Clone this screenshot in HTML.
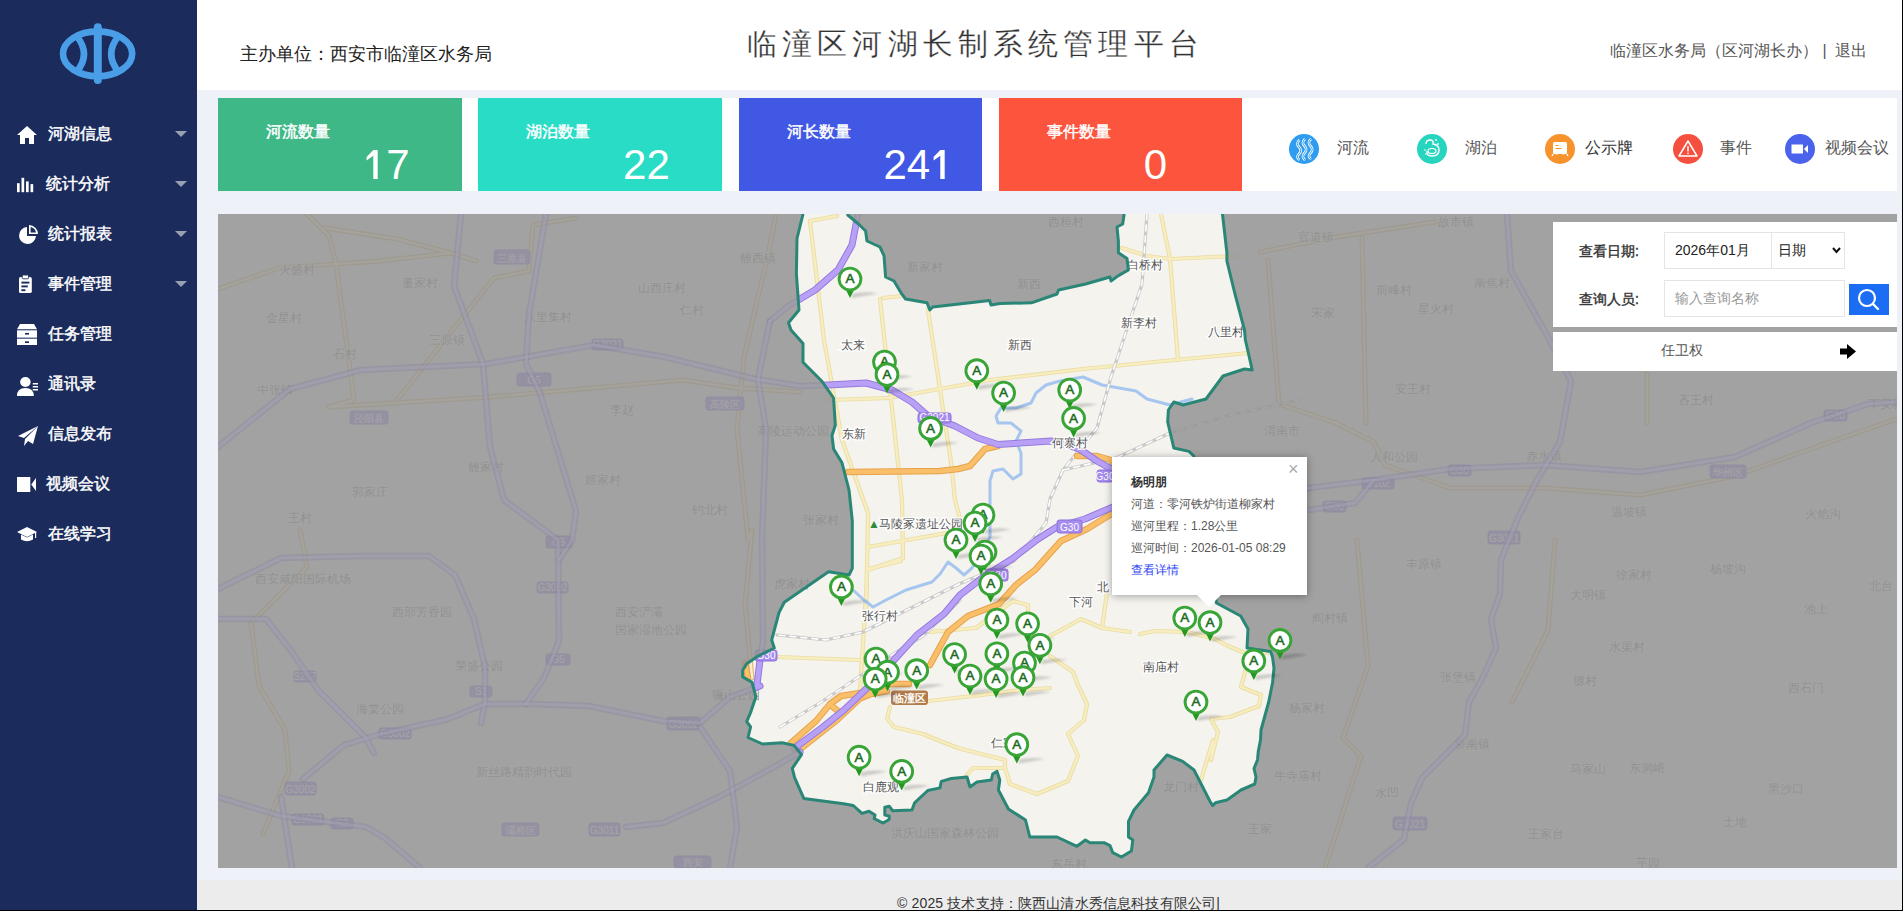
<!DOCTYPE html>
<html><head><meta charset="utf-8">
<style>
*{box-sizing:border-box;margin:0;padding:0}
html,body{width:1903px;height:911px;overflow:hidden;background:#eff1f8;font-family:"Liberation Sans",sans-serif;position:relative}
#side{position:absolute;left:0;top:0;width:197px;height:911px;background:#1a2b5c}
.mi{position:absolute;color:#fff;font-size:16px;-webkit-text-stroke:0.45px #fff;line-height:22px;white-space:nowrap}
#hdr{position:absolute;left:197px;top:0;width:1706px;height:90px;background:#fff}
#org{position:absolute;left:240px;top:42px;font-size:18px;line-height:24px;color:#222;white-space:nowrap}
#title{position:absolute;left:747px;top:26px;font-size:30px;line-height:36px;color:#333;letter-spacing:5.15px;white-space:nowrap;-webkit-text-stroke:0.25px #fff}
#user{position:absolute;left:1610px;top:40px;font-size:16px;line-height:22px;color:#555;white-space:nowrap}
#foot{position:absolute;left:197px;top:880px;width:1706px;height:31px;background:#ececec}
#ftxt{position:absolute;left:897px;top:894.5px;font-size:14px;line-height:16px;color:#333;white-space:nowrap;letter-spacing:0.15px}
#bottomline{position:absolute;left:0;top:910px;width:1903px;height:1px;background:#000}
#panel{position:absolute;left:218px;top:98px;width:1679px;height:93px;background:#fff}
.card{position:absolute;top:98px;width:243.5px;height:93px;color:#fff}
.card .lb{position:absolute;left:48px;top:23px;font-size:16px;-webkit-text-stroke:0.45px #fff;line-height:22px;white-space:nowrap}
.card .nm{position:absolute;left:144.8px;top:43.6px;font-size:42px;line-height:46px;white-space:nowrap}
.one{display:inline-block;vertical-align:-0.5px}
.lgc{position:absolute;top:134px;width:30px;height:30px;border-radius:50%}
.lgc svg{position:absolute;left:0;top:0}
.lgt{position:absolute;top:137px;font-size:16px;line-height:22px;color:#555;white-space:nowrap}
#map{position:absolute;left:218px;top:214px;width:1679px;height:654px;background:#a3a3a1;overflow:hidden}
.qp{position:absolute;background:#fff}
.ql{position:absolute;font-size:14px;-webkit-text-stroke:0.4px #333;color:#333;line-height:18px;white-space:nowrap}
.inp{position:absolute;border:1px solid #e4e4e4;background:#fff;font-size:14px;line-height:18px;white-space:nowrap}
#pop{position:absolute;left:1112px;top:457px;width:195px;height:138px;background:#fff;box-shadow:0 1px 8px rgba(0,0,0,0.35)}
#pop .pl{position:absolute;left:19px;font-size:12px;line-height:16px;color:#555;white-space:nowrap}
</style></head><body>
<div id="side">
<svg style="position:absolute;left:55px;top:20px" width="86" height="68" viewBox="55 20 86 68">
<ellipse cx="97.6" cy="53.8" rx="34.6" ry="22.4" fill="none" stroke="#4a9ee8" stroke-width="6.6"/>
<path d="M76.5 36 Q91.5 54 76.5 72" fill="none" stroke="#4a9ee8" stroke-width="6.6"/>
<path d="M118.7 36 Q103.7 54 118.7 72" fill="none" stroke="#4a9ee8" stroke-width="6.6"/>
<line x1="97.8" y1="27.3" x2="97.8" y2="80" stroke="#4a9ee8" stroke-width="8" stroke-linecap="round"/>
</svg>
<svg style="position:absolute;left:17px;top:125px" width="20" height="20" viewBox="0 0 20 20" preserveAspectRatio="none"><path d="M10 1 L0 10 L3 10 L3 19 L8 19 L8 13 L12 13 L12 19 L17 19 L17 10 L20 10 Z" fill="#fff"/></svg>
<div class="mi" style="left:47.5px;top:123px">河湖信息</div>
<svg style="position:absolute;left:175px;top:131px" width="12" height="6"><path d="M0 0 L12 0 L6 6 Z" fill="#9aa0b4"/></svg>
<svg style="position:absolute;left:17px;top:176px" width="18" height="18" viewBox="0 0 20 20" preserveAspectRatio="none"><rect x="0" y="8" width="3" height="10" fill="#fff"/><rect x="5" y="2" width="3" height="16" fill="#fff"/><rect x="10" y="6" width="3" height="12" fill="#fff"/><rect x="15" y="9" width="3" height="9" fill="#fff"/></svg>
<div class="mi" style="left:45.5px;top:173px">统计分析</div>
<svg style="position:absolute;left:175px;top:181px" width="12" height="6"><path d="M0 0 L12 0 L6 6 Z" fill="#9aa0b4"/></svg>
<svg style="position:absolute;left:18px;top:225px" width="20" height="20" viewBox="0 0 20 20" preserveAspectRatio="none"><path d="M9 2 A8.5 8.5 0 1 0 18 11 L9 11 Z" fill="#fff"/><path d="M11 0 L11 9 L20 9 A9 9 0 0 0 11 0 Z M12.6 2 A7 7 0 0 1 18 7.4 L12.6 7.4 Z" fill="#fff" fill-rule="evenodd"/></svg>
<div class="mi" style="left:47.5px;top:223px">统计报表</div>
<svg style="position:absolute;left:175px;top:231px" width="12" height="6"><path d="M0 0 L12 0 L6 6 Z" fill="#9aa0b4"/></svg>
<svg style="position:absolute;left:19px;top:275px" width="16" height="19" viewBox="0 0 20 20" preserveAspectRatio="none"><rect x="0" y="2" width="16" height="17" rx="2" fill="#fff"/><rect x="4" y="0" width="8" height="4" rx="1" fill="#fff" stroke="#1a2b5c" stroke-width="1"/><rect x="3" y="7" width="10" height="2" fill="#1a2b5c"/><rect x="3" y="11" width="8" height="2" fill="#1a2b5c"/><rect x="3" y="15" width="5" height="2" fill="#1a2b5c"/></svg>
<div class="mi" style="left:47.5px;top:273px">事件管理</div>
<svg style="position:absolute;left:175px;top:281px" width="12" height="6"><path d="M0 0 L12 0 L6 6 Z" fill="#9aa0b4"/></svg>
<svg style="position:absolute;left:17px;top:324px" width="20" height="21" viewBox="0 0 20 20" preserveAspectRatio="none"><path d="M3 0 L17 0 L20 5 L0 5 Z" fill="#fff"/><rect x="0" y="6" width="20" height="7" fill="#fff"/><rect x="0" y="14" width="20" height="7" fill="#fff"/><rect x="8" y="8.5" width="4" height="1.6" fill="#1a2b5c"/><rect x="8" y="16.5" width="4" height="1.6" fill="#1a2b5c"/></svg>
<div class="mi" style="left:48px;top:323px">任务管理</div>
<svg style="position:absolute;left:17px;top:376px" width="21" height="20" viewBox="0 0 20 20" preserveAspectRatio="none"><circle cx="8" cy="6" r="5" fill="#fff"/><path d="M0 20 Q0 12 8 12 Q16 12 16 20 Z" fill="#fff"/><rect x="15" y="7" width="5" height="1.5" fill="#fff"/><rect x="15" y="10" width="5" height="1.5" fill="#fff"/><rect x="15" y="13" width="5" height="1.5" fill="#fff"/></svg>
<div class="mi" style="left:48px;top:373px">通讯录</div>
<svg style="position:absolute;left:18px;top:426px" width="20" height="20" viewBox="0 0 20 20" preserveAspectRatio="none"><path d="M20 0 L0 10 L6 12 Z" fill="#fff"/><path d="M20 0 L7 13 L6 20 L10 15 L15 18 Z" fill="#fff"/></svg>
<div class="mi" style="left:48px;top:423px">信息发布</div>
<svg style="position:absolute;left:17px;top:477px" width="19" height="15" viewBox="0 0 20 15" preserveAspectRatio="none"><rect x="0" y="0" width="14" height="15" fill="#fff"/><path d="M15 7.5 L20 1 L20 14 Z" fill="#fff"/></svg>
<div class="mi" style="left:45.5px;top:473px">视频会议</div>
<svg style="position:absolute;left:17px;top:527px" width="20" height="15" viewBox="0 0 20 15" preserveAspectRatio="none"><path d="M10 0 L20 5 L10 10 L0 5 Z" fill="#fff"/><path d="M4 7.5 L4 12.5 Q10 16 16 12.5 L16 7.5 L10 10.5 Z" fill="#fff"/><rect x="18" y="5" width="1.2" height="6" fill="#fff"/></svg>
<div class="mi" style="left:48px;top:523px">在线学习</div>
</div>
<div id="hdr"></div>
<div id="org">主办单位：西安市临潼区水务局</div>
<div id="title">临潼区河湖长制系统管理平台</div>
<div id="user">临潼区水务局（区河湖长办）&nbsp;|&nbsp; 退出</div>
<div id="panel"></div>
<div class="card" style="left:218px;background:#3eb887"><div class="lb">河流数量</div><div class="nm"><svg class="one" width="23.4" height="29.2" viewBox="0 0 23.4 29.2"><polygon points="10.3,0 14.7,0 14.7,29.2 10.3,29.2 10.3,5.8 3.6,10.6 3.6,7.1" fill="#fff"/></svg>7</div></div>
<div class="card" style="left:478.3px;background:#28dcc6"><div class="lb">湖泊数量</div><div class="nm">22</div></div>
<div class="card" style="left:738.6px;background:#4158e4"><div class="lb">河长数量</div><div class="nm">24<svg class="one" width="23.4" height="29.2" viewBox="0 0 23.4 29.2"><polygon points="10.3,0 14.7,0 14.7,29.2 10.3,29.2 10.3,5.8 3.6,10.6 3.6,7.1" fill="#fff"/></svg></div></div>
<div class="card" style="left:998.9px;background:#fc543d"><div class="lb">事件数量</div><div class="nm">0</div></div>

<div class="lgc" style="left:1289px;background:#2e9cf0"><svg width="30" height="30" viewBox="0 0 30 30"><path d="M10.5 6 Q6.5 9.5 10 13 Q13.5 16.5 10 20 Q6.5 23.5 10.5 26 M16 5 Q12 8.5 15.5 12 Q19 15.5 15.5 19 Q12 22.5 16 26 M22 5 Q18 8.5 21.5 12 Q25 15.5 21.5 19 Q18 22.5 22 25" fill="none" stroke="#fff" stroke-width="2.6"/><path d="M10.5 6 Q6.5 9.5 10 13 Q13.5 16.5 10 20 Q6.5 23.5 10.5 26 M16 5 Q12 8.5 15.5 12 Q19 15.5 15.5 19 Q12 22.5 16 26 M22 5 Q18 8.5 21.5 12 Q25 15.5 21.5 19 Q18 22.5 22 25" fill="none" stroke="#2e9cf0" stroke-width="1"/></svg></div>
<div class="lgt" style="left:1337px">河流</div>
<div class="lgc" style="left:1416.5px;background:#27d4be"><svg width="30" height="30" viewBox="0 0 30 30"><path d="M9 10 Q9 6 13 6 Q17 6 16 10 Q22 11 22 16 Q22 22 15 22 Q9 22 10 17" fill="none" stroke="#fff" stroke-width="1.4"/><ellipse cx="15" cy="17" rx="4" ry="2.5" fill="none" stroke="#fff" stroke-width="1.2"/><circle cx="19" cy="6" r="0.9" fill="#fff"/><circle cx="21" cy="10" r="0.9" fill="#fff"/><circle cx="8" cy="16" r="0.8" fill="#fff"/><circle cx="9" cy="20" r="0.8" fill="#fff"/></svg></div>
<div class="lgt" style="left:1465px">湖泊</div>
<div class="lgc" style="left:1544.5px;background:#f7932d"><svg width="30" height="30" viewBox="0 0 30 30"><rect x="8" y="8" width="14" height="12" rx="1.5" fill="#fff"/><path d="M8 20 L7 22 M22 20 L23 22 M11 20 Q15 18 19 20" fill="none" stroke="#fff" stroke-width="1.4"/><rect x="10.5" y="11" width="3" height="1" fill="#f7932d"/><rect x="10.5" y="14" width="6" height="1" fill="#f7932d"/></svg></div>
<div class="lgt" style="left:1585px;color:#333">公示牌</div>
<div class="lgc" style="left:1672.5px;background:#f5503f"><svg width="30" height="30" viewBox="0 0 30 30"><path d="M15 7 L24 22 L6 22 Z" fill="none" stroke="#fff" stroke-width="1.5" stroke-linejoin="round"/><rect x="14.3" y="12" width="1.4" height="5.5" fill="#fff"/><rect x="14.3" y="18.6" width="1.4" height="1.5" fill="#fff"/></svg></div>
<div class="lgt" style="left:1720px">事件</div>
<div class="lgc" style="left:1784.5px;background:#4a62ec"><svg width="30" height="30" viewBox="0 0 30 30"><rect x="6.5" y="10.5" width="11.5" height="9" fill="#fff"/><path d="M19 15 L23 11 L23 19 Z" fill="#fff"/></svg></div>
<div class="lgt" style="left:1825px">视频会议</div>

<div id="map">
<svg width="1679" height="654" viewBox="218 214 1679 654" style="position:absolute;left:0;top:0" font-family="Liberation Sans, sans-serif">
<defs><filter id="blr" x="-50%" y="-50%" width="200%" height="200%"><feGaussianBlur stdDeviation="1.2"/></filter></defs>
<rect x="218" y="214" width="1679" height="654" fill="#f4f3ee"/>
<polyline points="307,214 329,236 336,264 354,400 329,407" fill="none" stroke-linejoin="round" stroke-linecap="round" stroke="#dfb978" stroke-width="5"/>
<polyline points="329,407 490,397 683,380 737,388 800,392" fill="none" stroke-linejoin="round" stroke-linecap="round" stroke="#dfb978" stroke-width="5"/>
<polyline points="218,289 279,268 336,264 379,261 451,253 476,261" fill="none" stroke-linejoin="round" stroke-linecap="round" stroke="#dfb978" stroke-width="5"/>
<polyline points="325,228 397,239 451,253" fill="none" stroke-linejoin="round" stroke-linecap="round" stroke="#dfb978" stroke-width="5"/>
<polyline points="397,400 494,278 529,271 533,225 576,218" fill="none" stroke-linejoin="round" stroke-linecap="round" stroke="#dfb978" stroke-width="5"/>
<polyline points="776,214 769,250 744,357 737,429 748,540 752,530 745,604 752,678" fill="none" stroke-linejoin="round" stroke-linecap="round" stroke="#dfb978" stroke-width="5"/>
<polyline points="300,530 307,567 251,623 259,686 285,730 289,771 263,834" fill="none" stroke-linejoin="round" stroke-linecap="round" stroke="#dfb978" stroke-width="5"/>
<polyline points="1260,252 1336,237 1435,222" fill="none" stroke-linejoin="round" stroke-linecap="round" stroke="#dfb978" stroke-width="5"/>
<polyline points="1268,260 1279,404 1336,423 1374,442 1385,465 1450,488 1545,488 1640,495 1735,476 1830,442 1897,419" fill="none" stroke-linejoin="round" stroke-linecap="round" stroke="#dfb978" stroke-width="5"/>
<polyline points="1362,237 1366,423" fill="none" stroke-linejoin="round" stroke-linecap="round" stroke="#dfb978" stroke-width="5"/>
<polyline points="1647,374 1647,423" fill="none" stroke-linejoin="round" stroke-linecap="round" stroke="#dfb978" stroke-width="5"/>
<polyline points="1357,540 1368,666 1343,738 1361,756 1325,868" fill="none" stroke-linejoin="round" stroke-linecap="round" stroke="#dfb978" stroke-width="5"/>
<polyline points="1555,540 1548,630 1512,702" fill="none" stroke-linejoin="round" stroke-linecap="round" stroke="#dfb978" stroke-width="5"/>
<polyline points="307,214 329,236 336,264 354,400 329,407" fill="none" stroke-linejoin="round" stroke-linecap="round" stroke="#fbefd0" stroke-width="2.6"/>
<polyline points="329,407 490,397 683,380 737,388 800,392" fill="none" stroke-linejoin="round" stroke-linecap="round" stroke="#fbefd0" stroke-width="2.6"/>
<polyline points="218,289 279,268 336,264 379,261 451,253 476,261" fill="none" stroke-linejoin="round" stroke-linecap="round" stroke="#fbefd0" stroke-width="2.6"/>
<polyline points="325,228 397,239 451,253" fill="none" stroke-linejoin="round" stroke-linecap="round" stroke="#fbefd0" stroke-width="2.6"/>
<polyline points="397,400 494,278 529,271 533,225 576,218" fill="none" stroke-linejoin="round" stroke-linecap="round" stroke="#fbefd0" stroke-width="2.6"/>
<polyline points="776,214 769,250 744,357 737,429 748,540 752,530 745,604 752,678" fill="none" stroke-linejoin="round" stroke-linecap="round" stroke="#fbefd0" stroke-width="2.6"/>
<polyline points="300,530 307,567 251,623 259,686 285,730 289,771 263,834" fill="none" stroke-linejoin="round" stroke-linecap="round" stroke="#fbefd0" stroke-width="2.6"/>
<polyline points="1260,252 1336,237 1435,222" fill="none" stroke-linejoin="round" stroke-linecap="round" stroke="#fbefd0" stroke-width="2.6"/>
<polyline points="1268,260 1279,404 1336,423 1374,442 1385,465 1450,488 1545,488 1640,495 1735,476 1830,442 1897,419" fill="none" stroke-linejoin="round" stroke-linecap="round" stroke="#fbefd0" stroke-width="2.6"/>
<polyline points="1362,237 1366,423" fill="none" stroke-linejoin="round" stroke-linecap="round" stroke="#fbefd0" stroke-width="2.6"/>
<polyline points="1647,374 1647,423" fill="none" stroke-linejoin="round" stroke-linecap="round" stroke="#fbefd0" stroke-width="2.6"/>
<polyline points="1357,540 1368,666 1343,738 1361,756 1325,868" fill="none" stroke-linejoin="round" stroke-linecap="round" stroke="#fbefd0" stroke-width="2.6"/>
<polyline points="1555,540 1548,630 1512,702" fill="none" stroke-linejoin="round" stroke-linecap="round" stroke="#fbefd0" stroke-width="2.6"/>
<text x="279" y="274" font-size="12" fill="#888" stroke="#fff" stroke-width="2" stroke-opacity="0.6" paint-order="stroke">火盛村</text>
<text x="402" y="287" font-size="12" fill="#888" stroke="#fff" stroke-width="2" stroke-opacity="0.6" paint-order="stroke">董家村</text>
<text x="266" y="322" font-size="12" fill="#888" stroke="#fff" stroke-width="2" stroke-opacity="0.6" paint-order="stroke">金星村</text>
<text x="429" y="344" font-size="12" fill="#888" stroke="#fff" stroke-width="2" stroke-opacity="0.6" paint-order="stroke">三原镇</text>
<text x="333" y="358" font-size="12" fill="#888" stroke="#fff" stroke-width="2" stroke-opacity="0.6" paint-order="stroke">石村</text>
<text x="257" y="394" font-size="12" fill="#888" stroke="#fff" stroke-width="2" stroke-opacity="0.6" paint-order="stroke">中张镇</text>
<text x="524" y="321" font-size="12" fill="#888" stroke="#fff" stroke-width="2" stroke-opacity="0.6" paint-order="stroke">八里集村</text>
<text x="638" y="292" font-size="12" fill="#888" stroke="#fff" stroke-width="2" stroke-opacity="0.6" paint-order="stroke">山西庄村</text>
<text x="680" y="314" font-size="12" fill="#888" stroke="#fff" stroke-width="2" stroke-opacity="0.6" paint-order="stroke">仁村</text>
<text x="740" y="262" font-size="12" fill="#888" stroke="#fff" stroke-width="2" stroke-opacity="0.6" paint-order="stroke">雒西镇</text>
<text x="610" y="414" font-size="12" fill="#888" stroke="#fff" stroke-width="2" stroke-opacity="0.6" paint-order="stroke">李赵</text>
<text x="468" y="471" font-size="12" fill="#888" stroke="#fff" stroke-width="2" stroke-opacity="0.6" paint-order="stroke">雒家村</text>
<text x="352" y="496" font-size="12" fill="#888" stroke="#fff" stroke-width="2" stroke-opacity="0.6" paint-order="stroke">郭家庄</text>
<text x="288" y="522" font-size="12" fill="#888" stroke="#fff" stroke-width="2" stroke-opacity="0.6" paint-order="stroke">王村</text>
<text x="585" y="484" font-size="12" fill="#888" stroke="#fff" stroke-width="2" stroke-opacity="0.6" paint-order="stroke">姬家村</text>
<text x="692" y="514" font-size="12" fill="#888" stroke="#fff" stroke-width="2" stroke-opacity="0.6" paint-order="stroke">钓北村</text>
<text x="757" y="435" font-size="12" fill="#888" stroke="#fff" stroke-width="2" stroke-opacity="0.6" paint-order="stroke">高陵运动公园</text>
<text x="255" y="583" font-size="12" fill="#888" stroke="#fff" stroke-width="2" stroke-opacity="0.6" paint-order="stroke">西安咸阳国际机场</text>
<text x="392" y="616" font-size="12" fill="#888" stroke="#fff" stroke-width="2" stroke-opacity="0.6" paint-order="stroke">西部芳香园</text>
<text x="455" y="670" font-size="12" fill="#888" stroke="#fff" stroke-width="2" stroke-opacity="0.6" paint-order="stroke">荣盛公园</text>
<text x="356" y="713" font-size="12" fill="#888" stroke="#fff" stroke-width="2" stroke-opacity="0.6" paint-order="stroke">海棠公园</text>
<text x="476" y="776" font-size="12" fill="#888" stroke="#fff" stroke-width="2" stroke-opacity="0.6" paint-order="stroke">新丝路精韵时代园</text>
<text x="615" y="616" font-size="12" fill="#888" stroke="#fff" stroke-width="2" stroke-opacity="0.6" paint-order="stroke">西安浐灞</text>
<text x="615" y="634" font-size="12" fill="#888" stroke="#fff" stroke-width="2" stroke-opacity="0.6" paint-order="stroke">国家湿地公园</text>
<text x="712" y="699" font-size="12" fill="#888" stroke="#fff" stroke-width="2" stroke-opacity="0.6" paint-order="stroke">骊山公园</text>
<text x="774" y="588" font-size="12" fill="#888" stroke="#fff" stroke-width="2" stroke-opacity="0.6" paint-order="stroke">虎家村</text>
<text x="803" y="524" font-size="12" fill="#888" stroke="#fff" stroke-width="2" stroke-opacity="0.6" paint-order="stroke">张家村</text>
<text x="1298" y="241" font-size="12" fill="#888" stroke="#fff" stroke-width="2" stroke-opacity="0.6" paint-order="stroke">官道镇</text>
<text x="1438" y="226" font-size="12" fill="#888" stroke="#fff" stroke-width="2" stroke-opacity="0.6" paint-order="stroke">故市镇</text>
<text x="1376" y="294" font-size="12" fill="#888" stroke="#fff" stroke-width="2" stroke-opacity="0.6" paint-order="stroke">前峰村</text>
<text x="1311" y="317" font-size="12" fill="#888" stroke="#fff" stroke-width="2" stroke-opacity="0.6" paint-order="stroke">宋家</text>
<text x="1474" y="287" font-size="12" fill="#888" stroke="#fff" stroke-width="2" stroke-opacity="0.6" paint-order="stroke">南焦村</text>
<text x="1418" y="313" font-size="12" fill="#888" stroke="#fff" stroke-width="2" stroke-opacity="0.6" paint-order="stroke">星火村</text>
<text x="1395" y="393" font-size="12" fill="#888" stroke="#fff" stroke-width="2" stroke-opacity="0.6" paint-order="stroke">安王村</text>
<text x="1264" y="435" font-size="12" fill="#888" stroke="#fff" stroke-width="2" stroke-opacity="0.6" paint-order="stroke">渭南市</text>
<text x="1370" y="461" font-size="12" fill="#888" stroke="#fff" stroke-width="2" stroke-opacity="0.6" paint-order="stroke">人和公园</text>
<text x="1526" y="460" font-size="12" fill="#888" stroke="#fff" stroke-width="2" stroke-opacity="0.6" paint-order="stroke">赤水镇</text>
<text x="1678" y="404" font-size="12" fill="#888" stroke="#fff" stroke-width="2" stroke-opacity="0.6" paint-order="stroke">吝王村</text>
<text x="1868" y="408" font-size="12" fill="#888" stroke="#fff" stroke-width="2" stroke-opacity="0.6" paint-order="stroke">下安村</text>
<text x="1611" y="516" font-size="12" fill="#888" stroke="#fff" stroke-width="2" stroke-opacity="0.6" paint-order="stroke">温坡镇</text>
<text x="1805" y="518" font-size="12" fill="#888" stroke="#fff" stroke-width="2" stroke-opacity="0.6" paint-order="stroke">火焰沟</text>
<text x="1406" y="568" font-size="12" fill="#888" stroke="#fff" stroke-width="2" stroke-opacity="0.6" paint-order="stroke">丰原镇</text>
<text x="1616" y="579" font-size="12" fill="#888" stroke="#fff" stroke-width="2" stroke-opacity="0.6" paint-order="stroke">徐家村</text>
<text x="1710" y="573" font-size="12" fill="#888" stroke="#fff" stroke-width="2" stroke-opacity="0.6" paint-order="stroke">杨坡沟</text>
<text x="1869" y="590" font-size="12" fill="#888" stroke="#fff" stroke-width="2" stroke-opacity="0.6" paint-order="stroke">北台</text>
<text x="1570" y="599" font-size="12" fill="#888" stroke="#fff" stroke-width="2" stroke-opacity="0.6" paint-order="stroke">大明镇</text>
<text x="1804" y="613" font-size="12" fill="#888" stroke="#fff" stroke-width="2" stroke-opacity="0.6" paint-order="stroke">池上</text>
<text x="1312" y="622" font-size="12" fill="#888" stroke="#fff" stroke-width="2" stroke-opacity="0.6" paint-order="stroke">阎村镇</text>
<text x="1609" y="651" font-size="12" fill="#888" stroke="#fff" stroke-width="2" stroke-opacity="0.6" paint-order="stroke">水渠村</text>
<text x="1440" y="681" font-size="12" fill="#888" stroke="#fff" stroke-width="2" stroke-opacity="0.6" paint-order="stroke">张堡镇</text>
<text x="1573" y="685" font-size="12" fill="#888" stroke="#fff" stroke-width="2" stroke-opacity="0.6" paint-order="stroke">塬村</text>
<text x="1788" y="692" font-size="12" fill="#888" stroke="#fff" stroke-width="2" stroke-opacity="0.6" paint-order="stroke">西石门</text>
<text x="1289" y="712" font-size="12" fill="#888" stroke="#fff" stroke-width="2" stroke-opacity="0.6" paint-order="stroke">杨家村</text>
<text x="1454" y="748" font-size="12" fill="#888" stroke="#fff" stroke-width="2" stroke-opacity="0.6" paint-order="stroke">桥南镇</text>
<text x="1570" y="773" font-size="12" fill="#888" stroke="#fff" stroke-width="2" stroke-opacity="0.6" paint-order="stroke">马家山</text>
<text x="1629" y="772" font-size="12" fill="#888" stroke="#fff" stroke-width="2" stroke-opacity="0.6" paint-order="stroke">东洞峪</text>
<text x="1274" y="780" font-size="12" fill="#888" stroke="#fff" stroke-width="2" stroke-opacity="0.6" paint-order="stroke">牛寺庙村</text>
<text x="1375" y="797" font-size="12" fill="#888" stroke="#fff" stroke-width="2" stroke-opacity="0.6" paint-order="stroke">水凹</text>
<text x="1768" y="793" font-size="12" fill="#888" stroke="#fff" stroke-width="2" stroke-opacity="0.6" paint-order="stroke">黑沙口</text>
<text x="1723" y="826" font-size="12" fill="#888" stroke="#fff" stroke-width="2" stroke-opacity="0.6" paint-order="stroke">土地</text>
<text x="1528" y="838" font-size="12" fill="#888" stroke="#fff" stroke-width="2" stroke-opacity="0.6" paint-order="stroke">王家台</text>
<text x="1248" y="833" font-size="12" fill="#888" stroke="#fff" stroke-width="2" stroke-opacity="0.6" paint-order="stroke">王家</text>
<text x="1163" y="791" font-size="12" fill="#888" stroke="#fff" stroke-width="2" stroke-opacity="0.6" paint-order="stroke">龙门村</text>
<text x="1636" y="867" font-size="12" fill="#888" stroke="#fff" stroke-width="2" stroke-opacity="0.6" paint-order="stroke">芋园</text>
<text x="1048" y="226" font-size="12" fill="#888" stroke="#fff" stroke-width="2" stroke-opacity="0.6" paint-order="stroke">西桓村</text>
<text x="907" y="271" font-size="12" fill="#888" stroke="#fff" stroke-width="2" stroke-opacity="0.6" paint-order="stroke">新家村</text>
<text x="1017" y="288" font-size="12" fill="#888" stroke="#fff" stroke-width="2" stroke-opacity="0.6" paint-order="stroke">新西</text>
<text x="891" y="837" font-size="12" fill="#888" stroke="#fff" stroke-width="2" stroke-opacity="0.6" paint-order="stroke">洪庆山国家森林公园</text>
<text x="1051" y="868" font-size="12" fill="#888" stroke="#fff" stroke-width="2" stroke-opacity="0.6" paint-order="stroke">东岳村</text>
<polyline points="810,221 837,216" fill="none" stroke-linejoin="round" stroke-linecap="round" stroke="#eadda2" stroke-width="4.2"/>
<polyline points="810,221 824,340 842,440 868,513 866,620" fill="none" stroke-linejoin="round" stroke-linecap="round" stroke="#eadda2" stroke-width="4.2"/>
<polyline points="880,299 902,500 903,558 868,570" fill="none" stroke-linejoin="round" stroke-linecap="round" stroke="#eadda2" stroke-width="4.2"/>
<polyline points="883,298 901,296" fill="none" stroke-linejoin="round" stroke-linecap="round" stroke="#eadda2" stroke-width="4.2"/>
<polyline points="928,310 951,462 955,500 962,526" fill="none" stroke-linejoin="round" stroke-linecap="round" stroke="#eadda2" stroke-width="4.2"/>
<polyline points="829,400 889,398 990,380 1083,369 1175,360 1248,353" fill="none" stroke-linejoin="round" stroke-linecap="round" stroke="#eadda2" stroke-width="4.2"/>
<polyline points="1122,248 1147,256 1170,259 1236,256" fill="none" stroke-linejoin="round" stroke-linecap="round" stroke="#eadda2" stroke-width="4.2"/>
<polyline points="1161,214 1170,259 1178,360" fill="none" stroke-linejoin="round" stroke-linecap="round" stroke="#eadda2" stroke-width="4.2"/>
<polyline points="868,547 947,533" fill="none" stroke-linejoin="round" stroke-linecap="round" stroke="#eadda2" stroke-width="4.2"/>
<polyline points="868,569 901,561" fill="none" stroke-linejoin="round" stroke-linecap="round" stroke="#eadda2" stroke-width="4.2"/>
<polyline points="867,580 860,691" fill="none" stroke-linejoin="round" stroke-linecap="round" stroke="#eadda2" stroke-width="4.2"/>
<polyline points="777,657 860,660" fill="none" stroke-linejoin="round" stroke-linecap="round" stroke="#eadda2" stroke-width="4.2"/>
<polyline points="930,632 976,628 1013,601 1028,605 1028,638" fill="none" stroke-linejoin="round" stroke-linecap="round" stroke="#eadda2" stroke-width="4.2"/>
<polyline points="1050,636 1081,619 1102,628 1130,632" fill="none" stroke-linejoin="round" stroke-linecap="round" stroke="#eadda2" stroke-width="4.2"/>
<polyline points="1107,593 1102,628" fill="none" stroke-linejoin="round" stroke-linecap="round" stroke="#eadda2" stroke-width="4.2"/>
<polyline points="1050,656 1073,672 1078,685 1087,704 1084,720 1068,734 1078,756 1068,781 1037,794 1010,784 1005,768 973,768 967,775" fill="none" stroke-linejoin="round" stroke-linecap="round" stroke="#eadda2" stroke-width="4.2"/>
<polyline points="890,707 887,718.5 894,727 923,734 940,741 958,748 981,754 1005,760 1005,768" fill="none" stroke-linejoin="round" stroke-linecap="round" stroke="#eadda2" stroke-width="4.2"/>
<polyline points="929,701 973,696 1021,690 1050,688" fill="none" stroke-linejoin="round" stroke-linecap="round" stroke="#eadda2" stroke-width="4.2"/>
<polyline points="1140,634 1155,631 1187,632 1215,639 1228,646 1245,653 1267,653" fill="none" stroke-linejoin="round" stroke-linecap="round" stroke="#eadda2" stroke-width="4.2"/>
<polyline points="1245,672 1241,687 1261,695 1259,706 1230,717 1211,719 1218,732 1211,760 1213,740 1201,780" fill="none" stroke-linejoin="round" stroke-linecap="round" stroke="#eadda2" stroke-width="4.2"/>
<polyline points="810,221 837,216" fill="none" stroke-linejoin="round" stroke-linecap="round" stroke="#f7edc0" stroke-width="2.4"/>
<polyline points="810,221 824,340 842,440 868,513 866,620" fill="none" stroke-linejoin="round" stroke-linecap="round" stroke="#f7edc0" stroke-width="2.4"/>
<polyline points="880,299 902,500 903,558 868,570" fill="none" stroke-linejoin="round" stroke-linecap="round" stroke="#f7edc0" stroke-width="2.4"/>
<polyline points="883,298 901,296" fill="none" stroke-linejoin="round" stroke-linecap="round" stroke="#f7edc0" stroke-width="2.4"/>
<polyline points="928,310 951,462 955,500 962,526" fill="none" stroke-linejoin="round" stroke-linecap="round" stroke="#f7edc0" stroke-width="2.4"/>
<polyline points="829,400 889,398 990,380 1083,369 1175,360 1248,353" fill="none" stroke-linejoin="round" stroke-linecap="round" stroke="#f7edc0" stroke-width="2.4"/>
<polyline points="1122,248 1147,256 1170,259 1236,256" fill="none" stroke-linejoin="round" stroke-linecap="round" stroke="#f7edc0" stroke-width="2.4"/>
<polyline points="1161,214 1170,259 1178,360" fill="none" stroke-linejoin="round" stroke-linecap="round" stroke="#f7edc0" stroke-width="2.4"/>
<polyline points="868,547 947,533" fill="none" stroke-linejoin="round" stroke-linecap="round" stroke="#f7edc0" stroke-width="2.4"/>
<polyline points="868,569 901,561" fill="none" stroke-linejoin="round" stroke-linecap="round" stroke="#f7edc0" stroke-width="2.4"/>
<polyline points="867,580 860,691" fill="none" stroke-linejoin="round" stroke-linecap="round" stroke="#f7edc0" stroke-width="2.4"/>
<polyline points="777,657 860,660" fill="none" stroke-linejoin="round" stroke-linecap="round" stroke="#f7edc0" stroke-width="2.4"/>
<polyline points="930,632 976,628 1013,601 1028,605 1028,638" fill="none" stroke-linejoin="round" stroke-linecap="round" stroke="#f7edc0" stroke-width="2.4"/>
<polyline points="1050,636 1081,619 1102,628 1130,632" fill="none" stroke-linejoin="round" stroke-linecap="round" stroke="#f7edc0" stroke-width="2.4"/>
<polyline points="1107,593 1102,628" fill="none" stroke-linejoin="round" stroke-linecap="round" stroke="#f7edc0" stroke-width="2.4"/>
<polyline points="1050,656 1073,672 1078,685 1087,704 1084,720 1068,734 1078,756 1068,781 1037,794 1010,784 1005,768 973,768 967,775" fill="none" stroke-linejoin="round" stroke-linecap="round" stroke="#f7edc0" stroke-width="2.4"/>
<polyline points="890,707 887,718.5 894,727 923,734 940,741 958,748 981,754 1005,760 1005,768" fill="none" stroke-linejoin="round" stroke-linecap="round" stroke="#f7edc0" stroke-width="2.4"/>
<polyline points="929,701 973,696 1021,690 1050,688" fill="none" stroke-linejoin="round" stroke-linecap="round" stroke="#f7edc0" stroke-width="2.4"/>
<polyline points="1140,634 1155,631 1187,632 1215,639 1228,646 1245,653 1267,653" fill="none" stroke-linejoin="round" stroke-linecap="round" stroke="#f7edc0" stroke-width="2.4"/>
<polyline points="1245,672 1241,687 1261,695 1259,706 1230,717 1211,719 1218,732 1211,760 1213,740 1201,780" fill="none" stroke-linejoin="round" stroke-linecap="round" stroke="#f7edc0" stroke-width="2.4"/>
<polyline points="1192,399 1170,405 1147,399 1136,391 1102,385 1083,377 1060,381 1046,385 1036,393 1031,403 1016,408 1001,408 996,416 998,423 1011,423 1021,431 1016,441 1021,453 1021,474 1013,479 1003,469 993,471 990,481 990,512 990,537 972,568 964,575 956,568 948,562 940,574 932,582 906,590 886,600 873,607 864,600 853,590" fill="none" stroke-linejoin="round" stroke-linecap="round" stroke="#a6c6f0" stroke-width="3"/>
<polyline points="1147,214 1142,284 1111,377 1097,428 1063,470 1050,499 1046,523 1014,561 959,584 895,616 863,632 826,640 777,635" fill="none" stroke-linejoin="round" stroke-linecap="round" stroke="#c9c9c9" stroke-width="3.2"/>
<polyline points="780,727 823,701 858.5,677 880,663 901,649 923,636 960,600" fill="none" stroke-linejoin="round" stroke-linecap="round" stroke="#c9c9c9" stroke-width="3.2"/>
<polyline points="1063,470 1116,458 1170,433 1230,415 1300,400" fill="none" stroke-linejoin="round" stroke-linecap="round" stroke="#c9c9c9" stroke-width="3.2"/>
<polyline points="1147,214 1142,284 1111,377 1097,428 1063,470 1050,499 1046,523 1014,561 959,584 895,616 863,632 826,640 777,635" fill="none" stroke-linejoin="round" stroke-linecap="round" stroke="#ffffff" stroke-width="1.6" stroke-dasharray="6 5"/>
<polyline points="780,727 823,701 858.5,677 880,663 901,649 923,636 960,600" fill="none" stroke-linejoin="round" stroke-linecap="round" stroke="#ffffff" stroke-width="1.6" stroke-dasharray="6 5"/>
<polyline points="1063,470 1116,458 1170,433 1230,415 1300,400" fill="none" stroke-linejoin="round" stroke-linecap="round" stroke="#ffffff" stroke-width="1.6" stroke-dasharray="6 5"/>
<polyline points="848,472 940,471 958,469 970,466 985,449 998,446" fill="none" stroke-linejoin="round" stroke-linecap="round" stroke="#e9a24c" stroke-width="6.5"/>
<polyline points="1077,456 1097,456 1111,460 1118,470" fill="none" stroke-linejoin="round" stroke-linecap="round" stroke="#e9a24c" stroke-width="6.5"/>
<polyline points="791,743 816,721 830,704 841,696 860,693 868,691 891,684 909,684" fill="none" stroke-linejoin="round" stroke-linecap="round" stroke="#e9a24c" stroke-width="6.5"/>
<polyline points="799,750 837,720 860,698.5 871,694 887,691" fill="none" stroke-linejoin="round" stroke-linecap="round" stroke="#e9a24c" stroke-width="6.5"/>
<polyline points="833,707 838.5,711.5" fill="none" stroke-linejoin="round" stroke-linecap="round" stroke="#e9a24c" stroke-width="6.5"/>
<polyline points="930,665 948,632 968,616 999,604 1016,585 1035,570 1061,541 1087,529 1113,513 1150,500" fill="none" stroke-linejoin="round" stroke-linecap="round" stroke="#e9a24c" stroke-width="6.5"/>
<polyline points="745,663 748,678" fill="none" stroke-linejoin="round" stroke-linecap="round" stroke="#e9a24c" stroke-width="6.5"/>
<polyline points="848,472 940,471 958,469 970,466 985,449 998,446" fill="none" stroke-linejoin="round" stroke-linecap="round" stroke="#f9bf69" stroke-width="4.5"/>
<polyline points="1077,456 1097,456 1111,460 1118,470" fill="none" stroke-linejoin="round" stroke-linecap="round" stroke="#f9bf69" stroke-width="4.5"/>
<polyline points="791,743 816,721 830,704 841,696 860,693 868,691 891,684 909,684" fill="none" stroke-linejoin="round" stroke-linecap="round" stroke="#f9bf69" stroke-width="4.5"/>
<polyline points="799,750 837,720 860,698.5 871,694 887,691" fill="none" stroke-linejoin="round" stroke-linecap="round" stroke="#f9bf69" stroke-width="4.5"/>
<polyline points="833,707 838.5,711.5" fill="none" stroke-linejoin="round" stroke-linecap="round" stroke="#f9bf69" stroke-width="4.5"/>
<polyline points="930,665 948,632 968,616 999,604 1016,585 1035,570 1061,541 1087,529 1113,513 1150,500" fill="none" stroke-linejoin="round" stroke-linecap="round" stroke="#f9bf69" stroke-width="4.5"/>
<polyline points="745,663 748,678" fill="none" stroke-linejoin="round" stroke-linecap="round" stroke="#f9bf69" stroke-width="4.5"/>
<clipPath id="inside"><polygon points="802.8,215 797,238.5 796.4,274 799,310 788.5,322.7 791,330 803,343.6 803,362.3 821.7,381 833.6,398 835.3,425.3 832,435.5 833.6,449 842,462.8 849,490 852.3,520.6 852.3,568.3 849,575 828.5,571.7 784.3,602.3 779,612.6 771.7,640 774.3,648 758.5,655.8 746.7,663.7 742.7,670.3 742.7,676.9 752,682.2 755.9,696.7 750.6,712.5 746.7,721.7 750.6,727 748,737.5 762.5,744 782.2,742.8 794,745.4 801.5,754.6 792.3,768.4 794.6,777.6 803.8,798.4 843.5,803.7 853.2,805.5 862,813.4 869,811.2 875,815.1 874.2,818.6 883,823 889.2,819.5 889.2,816 884.8,815.1 884.8,807.2 889.2,806.3 892.7,810.7 912,809.9 914.6,802.8 927.8,790.5 940,787.9 941.3,781.4 951.3,778.5 967,777 970,787 977,782 991.3,780 992.7,774 997,771.4 999.8,780 998.4,790 1008.4,809 1025.5,820 1029.8,837 1057,837 1076.9,846.3 1085.4,840 1090,842.7 1104,842.7 1110,845.6 1112.8,852.7 1121.4,857 1131.4,851 1132.8,840 1128.5,837 1128.5,821.3 1134,810 1148.5,792.8 1154,777 1154,770 1167,755 1182.7,761.4 1194,770 1209.8,801 1212.7,805.6 1215.5,802.8 1227,800 1241,790 1254.8,784 1256,777 1254,768.5 1257.5,760 1258.3,751.4 1260.5,740 1261,730 1268.7,702 1272.5,683 1274,668 1272.5,657 1270.6,651.6 1247,648 1248,629 1240.7,616 1216.5,603 1212,560 1205,500 1193.8,456 1189,451.4 1173.8,448 1167.7,422 1168.4,410 1173.8,402 1183,405 1206,399 1223,376 1244.5,369 1252.2,370 1245.4,340 1244.5,330 1235.4,295.6 1226.9,261 1226.9,252.8 1222.6,215 1222,205 1124,205 1124,215 1122.7,224 1117,227 1118.4,241.4 1118.4,252.8 1127,258.5 1128.4,270 1118.4,275.6 1111,281 1110,277 1085.6,284 1058.5,290 1057,294 1031.4,302.8 1000,303.5 991,305 989.7,300.6 932.7,307 929.8,310 927,302.8 905.6,299 901,292.8 894,281 885.6,277 884,255.7 880,247 867,241 865.6,231 858.5,224 847.8,215 847.8,205 802.8,205"/></clipPath><clipPath id="outside"><path clip-rule="evenodd" d="M218 214 H1897 V868 H218 Z M802.8,215 L797,238.5 L796.4,274 L799,310 L788.5,322.7 L791,330 L803,343.6 L803,362.3 L821.7,381 L833.6,398 L835.3,425.3 L832,435.5 L833.6,449 L842,462.8 L849,490 L852.3,520.6 L852.3,568.3 L849,575 L828.5,571.7 L784.3,602.3 L779,612.6 L771.7,640 L774.3,648 L758.5,655.8 L746.7,663.7 L742.7,670.3 L742.7,676.9 L752,682.2 L755.9,696.7 L750.6,712.5 L746.7,721.7 L750.6,727 L748,737.5 L762.5,744 L782.2,742.8 L794,745.4 L801.5,754.6 L792.3,768.4 L794.6,777.6 L803.8,798.4 L843.5,803.7 L853.2,805.5 L862,813.4 L869,811.2 L875,815.1 L874.2,818.6 L883,823 L889.2,819.5 L889.2,816 L884.8,815.1 L884.8,807.2 L889.2,806.3 L892.7,810.7 L912,809.9 L914.6,802.8 L927.8,790.5 L940,787.9 L941.3,781.4 L951.3,778.5 L967,777 L970,787 L977,782 L991.3,780 L992.7,774 L997,771.4 L999.8,780 L998.4,790 L1008.4,809 L1025.5,820 L1029.8,837 L1057,837 L1076.9,846.3 L1085.4,840 L1090,842.7 L1104,842.7 L1110,845.6 L1112.8,852.7 L1121.4,857 L1131.4,851 L1132.8,840 L1128.5,837 L1128.5,821.3 L1134,810 L1148.5,792.8 L1154,777 L1154,770 L1167,755 L1182.7,761.4 L1194,770 L1209.8,801 L1212.7,805.6 L1215.5,802.8 L1227,800 L1241,790 L1254.8,784 L1256,777 L1254,768.5 L1257.5,760 L1258.3,751.4 L1260.5,740 L1261,730 L1268.7,702 L1272.5,683 L1274,668 L1272.5,657 L1270.6,651.6 L1247,648 L1248,629 L1240.7,616 L1216.5,603 L1212,560 L1205,500 L1193.8,456 L1189,451.4 L1173.8,448 L1167.7,422 L1168.4,410 L1173.8,402 L1183,405 L1206,399 L1223,376 L1244.5,369 L1252.2,370 L1245.4,340 L1244.5,330 L1235.4,295.6 L1226.9,261 L1226.9,252.8 L1222.6,215 L1222,205 L1124,205 L1124,215 L1122.7,224 L1117,227 L1118.4,241.4 L1118.4,252.8 L1127,258.5 L1128.4,270 L1118.4,275.6 L1111,281 L1110,277 L1085.6,284 L1058.5,290 L1057,294 L1031.4,302.8 L1000,303.5 L991,305 L989.7,300.6 L932.7,307 L929.8,310 L927,302.8 L905.6,299 L901,292.8 L894,281 L885.6,277 L884,255.7 L880,247 L867,241 L865.6,231 L858.5,224 L847.8,215 L847.8,205 L802.8,205 Z"/></clipPath>
<g clip-path="url(#inside)">
<polyline points="858,214 852,245 838,270 815,290 790,305 770,321" fill="none" stroke-linejoin="round" stroke-linecap="round" stroke="#957ade" stroke-width="7"/>
<polyline points="218,447 290,389 361,370 486,364 594,345 665,357 755,379 800,386 828,385 866,383 892,390 912,402 928,416 955,426 978,438 998,444.5 1051,441 1074,447 1081,450 1097,461 1113,470 1140,482 1200,490 1309,488 1374,480 1450,469 1545,465 1640,472 1735,457 1811,423 1868,404 1897,402" fill="none" stroke-linejoin="round" stroke-linecap="round" stroke="#957ade" stroke-width="7"/>
<polyline points="794,748.5 823,727 844,710 864,691 879,676 894,660 917,635 944,614 960,595 982,578 1012,559 1038,539 1057,527 1085,519 1113,507 1160,495 1250,490 1309,488" fill="none" stroke-linejoin="round" stroke-linecap="round" stroke="#957ade" stroke-width="7"/>
<polyline points="461,214 454,286 483,364 490,447 504,500 558,540 559,641 544,678 526,704" fill="none" stroke-linejoin="round" stroke-linecap="round" stroke="#957ade" stroke-width="7"/>
<polyline points="546,214 529,314 526,364 540,393 562,465 576,511 572,540 559,560" fill="none" stroke-linejoin="round" stroke-linecap="round" stroke="#957ade" stroke-width="7"/>
<polyline points="770,321 758,379 766,429 762,540 763,641 760,660 757,685" fill="none" stroke-linejoin="round" stroke-linecap="round" stroke="#957ade" stroke-width="7"/>
<polyline points="218,589 281,558 359,556 429,556 455,575 474,619 485,667 485,701 481,723" fill="none" stroke-linejoin="round" stroke-linecap="round" stroke="#957ade" stroke-width="7"/>
<polyline points="218,619 266,619 292,652 318,690 366,738 374,753" fill="none" stroke-linejoin="round" stroke-linecap="round" stroke="#957ade" stroke-width="7"/>
<polyline points="303,779 344,745 381,734 448,719 485,704 533,704 589,706 663,721 700,723 730,697 760,686" fill="none" stroke-linejoin="round" stroke-linecap="round" stroke="#957ade" stroke-width="7"/>
<polyline points="218,797 281,816 366,827 385,838 420,868" fill="none" stroke-linejoin="round" stroke-linecap="round" stroke="#957ade" stroke-width="7"/>
<polyline points="626,827 663,823 719,797 774,767 800,752" fill="none" stroke-linejoin="round" stroke-linecap="round" stroke="#957ade" stroke-width="7"/>
<polyline points="700,727 730,771 737,827 730,868" fill="none" stroke-linejoin="round" stroke-linecap="round" stroke="#957ade" stroke-width="7"/>
<polyline points="281,797 292,868" fill="none" stroke-linejoin="round" stroke-linecap="round" stroke="#957ade" stroke-width="7"/>
<polyline points="1507,214 1511,271 1549,339 1571,381 1560,442 1537,480 1518,518 1501,560 1500,594 1491,619 1496,648 1483,677 1469,702 1465,735 1422,778 1411,803 1404,839 1368,868" fill="none" stroke-linejoin="round" stroke-linecap="round" stroke="#957ade" stroke-width="7"/>
<polyline points="1309,510 1355,503 1374,480" fill="none" stroke-linejoin="round" stroke-linecap="round" stroke="#957ade" stroke-width="7"/>
<polyline points="858,214 852,245 838,270 815,290 790,305 770,321" fill="none" stroke-linejoin="round" stroke-linecap="round" stroke="#b8a0f6" stroke-width="5"/>
<polyline points="218,447 290,389 361,370 486,364 594,345 665,357 755,379 800,386 828,385 866,383 892,390 912,402 928,416 955,426 978,438 998,444.5 1051,441 1074,447 1081,450 1097,461 1113,470 1140,482 1200,490 1309,488 1374,480 1450,469 1545,465 1640,472 1735,457 1811,423 1868,404 1897,402" fill="none" stroke-linejoin="round" stroke-linecap="round" stroke="#b8a0f6" stroke-width="5"/>
<polyline points="794,748.5 823,727 844,710 864,691 879,676 894,660 917,635 944,614 960,595 982,578 1012,559 1038,539 1057,527 1085,519 1113,507 1160,495 1250,490 1309,488" fill="none" stroke-linejoin="round" stroke-linecap="round" stroke="#b8a0f6" stroke-width="5"/>
<polyline points="461,214 454,286 483,364 490,447 504,500 558,540 559,641 544,678 526,704" fill="none" stroke-linejoin="round" stroke-linecap="round" stroke="#b8a0f6" stroke-width="5"/>
<polyline points="546,214 529,314 526,364 540,393 562,465 576,511 572,540 559,560" fill="none" stroke-linejoin="round" stroke-linecap="round" stroke="#b8a0f6" stroke-width="5"/>
<polyline points="770,321 758,379 766,429 762,540 763,641 760,660 757,685" fill="none" stroke-linejoin="round" stroke-linecap="round" stroke="#b8a0f6" stroke-width="5"/>
<polyline points="218,589 281,558 359,556 429,556 455,575 474,619 485,667 485,701 481,723" fill="none" stroke-linejoin="round" stroke-linecap="round" stroke="#b8a0f6" stroke-width="5"/>
<polyline points="218,619 266,619 292,652 318,690 366,738 374,753" fill="none" stroke-linejoin="round" stroke-linecap="round" stroke="#b8a0f6" stroke-width="5"/>
<polyline points="303,779 344,745 381,734 448,719 485,704 533,704 589,706 663,721 700,723 730,697 760,686" fill="none" stroke-linejoin="round" stroke-linecap="round" stroke="#b8a0f6" stroke-width="5"/>
<polyline points="218,797 281,816 366,827 385,838 420,868" fill="none" stroke-linejoin="round" stroke-linecap="round" stroke="#b8a0f6" stroke-width="5"/>
<polyline points="626,827 663,823 719,797 774,767 800,752" fill="none" stroke-linejoin="round" stroke-linecap="round" stroke="#b8a0f6" stroke-width="5"/>
<polyline points="700,727 730,771 737,827 730,868" fill="none" stroke-linejoin="round" stroke-linecap="round" stroke="#b8a0f6" stroke-width="5"/>
<polyline points="281,797 292,868" fill="none" stroke-linejoin="round" stroke-linecap="round" stroke="#b8a0f6" stroke-width="5"/>
<polyline points="1507,214 1511,271 1549,339 1571,381 1560,442 1537,480 1518,518 1501,560 1500,594 1491,619 1496,648 1483,677 1469,702 1465,735 1422,778 1411,803 1404,839 1368,868" fill="none" stroke-linejoin="round" stroke-linecap="round" stroke="#b8a0f6" stroke-width="5"/>
<polyline points="1309,510 1355,503 1374,480" fill="none" stroke-linejoin="round" stroke-linecap="round" stroke="#b8a0f6" stroke-width="5"/>
</g>
<rect x="494" y="250" width="36" height="14" rx="2.5" fill="#a78cf0" stroke="#8c70dc" stroke-width="1"/><text x="512.0" y="261.5" font-size="10" fill="#fff" text-anchor="middle">三原县</text>
<rect x="350" y="411" width="38" height="13" rx="2.5" fill="#a78cf0" stroke="#8c70dc" stroke-width="1"/><text x="369.0" y="421.5" font-size="10" fill="#fff" text-anchor="middle">泾阳县</text>
<rect x="592" y="339" width="31" height="11" rx="2.5" fill="#a78cf0" stroke="#8c70dc" stroke-width="1"/><text x="607.5" y="347.5" font-size="10" fill="#fff" text-anchor="middle">G3021</text>
<rect x="517" y="373" width="34" height="13" rx="2.5" fill="#a78cf0" stroke="#8c70dc" stroke-width="1"/><text x="534.0" y="383.5" font-size="10" fill="#fff" text-anchor="middle">G5</text>
<rect x="706" y="397" width="38" height="13" rx="2.5" fill="#a78cf0" stroke="#8c70dc" stroke-width="1"/><text x="725.0" y="407.5" font-size="10" fill="#fff" text-anchor="middle">高陵区</text>
<rect x="546" y="536" width="26" height="12" rx="2.5" fill="#a78cf0" stroke="#8c70dc" stroke-width="1"/><text x="559.0" y="545.5" font-size="10" fill="#fff" text-anchor="middle">G5</text>
<rect x="537" y="582" width="31" height="11" rx="2.5" fill="#a78cf0" stroke="#8c70dc" stroke-width="1"/><text x="552.5" y="590.5" font-size="10" fill="#fff" text-anchor="middle">G3002</text>
<rect x="546" y="654" width="24" height="11" rx="2.5" fill="#a78cf0" stroke="#8c70dc" stroke-width="1"/><text x="558.0" y="662.5" font-size="10" fill="#fff" text-anchor="middle">G5</text>
<rect x="470" y="686" width="22" height="11" rx="2.5" fill="#a78cf0" stroke="#8c70dc" stroke-width="1"/><text x="481.0" y="694.5" font-size="10" fill="#fff" text-anchor="middle">S1</text>
<rect x="379" y="728" width="32" height="11" rx="2.5" fill="#a78cf0" stroke="#8c70dc" stroke-width="1"/><text x="395.0" y="736.5" font-size="10" fill="#fff" text-anchor="middle">G3002</text>
<rect x="294" y="671" width="22" height="11" rx="2.5" fill="#a78cf0" stroke="#8c70dc" stroke-width="1"/><text x="305.0" y="679.5" font-size="10" fill="#fff" text-anchor="middle">S207</text>
<rect x="285" y="782" width="31" height="13" rx="2.5" fill="#a78cf0" stroke="#8c70dc" stroke-width="1"/><text x="300.5" y="792.5" font-size="10" fill="#fff" text-anchor="middle">G3002</text>
<rect x="292" y="814" width="32" height="11" rx="2.5" fill="#a78cf0" stroke="#8c70dc" stroke-width="1"/><text x="308.0" y="822.5" font-size="10" fill="#fff" text-anchor="middle">G1021</text>
<rect x="331" y="818" width="22" height="11" rx="2.5" fill="#a78cf0" stroke="#8c70dc" stroke-width="1"/><text x="342.0" y="826.5" font-size="10" fill="#fff" text-anchor="middle">S2</text>
<rect x="502" y="823" width="37" height="13" rx="2.5" fill="#a78cf0" stroke="#8c70dc" stroke-width="1"/><text x="520.5" y="833.5" font-size="10" fill="#fff" text-anchor="middle">灞桥区</text>
<rect x="589" y="823" width="31" height="13" rx="2.5" fill="#a78cf0" stroke="#8c70dc" stroke-width="1"/><text x="604.5" y="833.5" font-size="10" fill="#fff" text-anchor="middle">G3011</text>
<rect x="667" y="717" width="33" height="13" rx="2.5" fill="#a78cf0" stroke="#8c70dc" stroke-width="1"/><text x="683.5" y="727.5" font-size="10" fill="#fff" text-anchor="middle">G3002</text>
<rect x="1448" y="465" width="23" height="11" rx="2.5" fill="#a78cf0" stroke="#8c70dc" stroke-width="1"/><text x="1459.5" y="473.5" font-size="10" fill="#fff" text-anchor="middle">G30</text>
<rect x="1362" y="478" width="32" height="11" rx="2.5" fill="#a78cf0" stroke="#8c70dc" stroke-width="1"/><text x="1378.0" y="486.5" font-size="10" fill="#fff" text-anchor="middle">S102</text>
<rect x="1323" y="501" width="23" height="11" rx="2.5" fill="#a78cf0" stroke="#8c70dc" stroke-width="1"/><text x="1334.5" y="509.5" font-size="10" fill="#fff" text-anchor="middle">G30</text>
<rect x="1710" y="465" width="36" height="13" rx="2.5" fill="#a78cf0" stroke="#8c70dc" stroke-width="1"/><text x="1728.0" y="475.5" font-size="10" fill="#fff" text-anchor="middle">华州区</text>
<rect x="1824" y="410" width="23" height="11" rx="2.5" fill="#a78cf0" stroke="#8c70dc" stroke-width="1"/><text x="1835.5" y="418.5" font-size="10" fill="#fff" text-anchor="middle">G30</text>
<rect x="1488" y="531" width="32" height="13" rx="2.5" fill="#a78cf0" stroke="#8c70dc" stroke-width="1"/><text x="1504.0" y="541.5" font-size="10" fill="#fff" text-anchor="middle">G3021</text>
<rect x="1393" y="817" width="34" height="13" rx="2.5" fill="#a78cf0" stroke="#8c70dc" stroke-width="1"/><text x="1410.0" y="827.5" font-size="10" fill="#fff" text-anchor="middle">G3021</text>
<rect x="674" y="856" width="37" height="12" rx="2.5" fill="#a78cf0" stroke="#8c70dc" stroke-width="1"/><text x="692.5" y="865.5" font-size="10" fill="#fff" text-anchor="middle">西安</text>
<rect x="918" y="413" width="33" height="10" rx="2.5" fill="#a78cf0" stroke="#8c70dc" stroke-width="1"/><text x="934.5" y="420.5" font-size="10" fill="#fff" text-anchor="middle">G3021</text>
<rect x="1057" y="520" width="25" height="13" rx="2.5" fill="#a78cf0" stroke="#8c70dc" stroke-width="1"/><text x="1069.5" y="530.5" font-size="10" fill="#fff" text-anchor="middle">G30</text>
<rect x="1097" y="470" width="16" height="12" rx="2.5" fill="#a78cf0" stroke="#8c70dc" stroke-width="1"/><text x="1105.0" y="479.5" font-size="10" fill="#fff" text-anchor="middle">G30</text>
<rect x="755" y="650" width="22" height="11" rx="2.5" fill="#a78cf0" stroke="#8c70dc" stroke-width="1"/><text x="766.0" y="658.5" font-size="10" fill="#fff" text-anchor="middle">G30</text>
<rect x="986" y="569" width="22" height="12" rx="2.5" fill="#a78cf0" stroke="#8c70dc" stroke-width="1"/><text x="997.0" y="578.5" font-size="10" fill="#fff" text-anchor="middle">G30</text>
<text x="841" y="349" font-size="12" fill="#555" stroke="#fff" stroke-width="2.5" paint-order="stroke">太来</text>
<text x="1008" y="349" font-size="12" fill="#555" stroke="#fff" stroke-width="2.5" paint-order="stroke">新西</text>
<text x="842" y="438" font-size="12" fill="#555" stroke="#fff" stroke-width="2.5" paint-order="stroke">东新</text>
<text x="1052" y="447" font-size="12" fill="#555" stroke="#fff" stroke-width="2.5" paint-order="stroke">何寨村</text>
<text x="1121" y="327" font-size="12" fill="#555" stroke="#fff" stroke-width="2.5" paint-order="stroke">新李村</text>
<text x="1208" y="336" font-size="12" fill="#555" stroke="#fff" stroke-width="2.5" paint-order="stroke">八里村</text>
<text x="1127" y="269" font-size="12" fill="#555" stroke="#fff" stroke-width="2.5" paint-order="stroke">白桥村</text>
<text x="862" y="620" font-size="12" fill="#555" stroke="#fff" stroke-width="2.5" paint-order="stroke">张行村</text>
<text x="1069" y="606" font-size="12" fill="#555" stroke="#fff" stroke-width="2.5" paint-order="stroke">下河</text>
<text x="1143" y="671" font-size="12" fill="#555" stroke="#fff" stroke-width="2.5" paint-order="stroke">南庙村</text>
<text x="991" y="747" font-size="12" fill="#555" stroke="#fff" stroke-width="2.5" paint-order="stroke">仁宗</text>
<text x="863" y="791" font-size="12" fill="#555" stroke="#fff" stroke-width="2.5" paint-order="stroke">白鹿观</text>
<text x="1097" y="591" font-size="12" fill="#555" stroke="#fff" stroke-width="2.5" paint-order="stroke">北</text>
<text x="868" y="528" font-size="12" fill="#2e8b3a">&#9650;</text><text x="879" y="528" font-size="12" fill="#555" stroke="#fff" stroke-width="2.5" paint-order="stroke">马陵冢遗址公园</text>
<rect x="891" y="690.5" width="37" height="14.5" rx="3" fill="#b27b4a"/><text x="909.5" y="702" font-size="11" font-weight="bold" fill="#fff" text-anchor="middle">临潼区</text>
<path fill-rule="evenodd" fill="rgb(147,147,146)" fill-opacity="0.84" d="M218 214 H1897 V868 H218 Z M802.8,215 L797,238.5 L796.4,274 L799,310 L788.5,322.7 L791,330 L803,343.6 L803,362.3 L821.7,381 L833.6,398 L835.3,425.3 L832,435.5 L833.6,449 L842,462.8 L849,490 L852.3,520.6 L852.3,568.3 L849,575 L828.5,571.7 L784.3,602.3 L779,612.6 L771.7,640 L774.3,648 L758.5,655.8 L746.7,663.7 L742.7,670.3 L742.7,676.9 L752,682.2 L755.9,696.7 L750.6,712.5 L746.7,721.7 L750.6,727 L748,737.5 L762.5,744 L782.2,742.8 L794,745.4 L801.5,754.6 L792.3,768.4 L794.6,777.6 L803.8,798.4 L843.5,803.7 L853.2,805.5 L862,813.4 L869,811.2 L875,815.1 L874.2,818.6 L883,823 L889.2,819.5 L889.2,816 L884.8,815.1 L884.8,807.2 L889.2,806.3 L892.7,810.7 L912,809.9 L914.6,802.8 L927.8,790.5 L940,787.9 L941.3,781.4 L951.3,778.5 L967,777 L970,787 L977,782 L991.3,780 L992.7,774 L997,771.4 L999.8,780 L998.4,790 L1008.4,809 L1025.5,820 L1029.8,837 L1057,837 L1076.9,846.3 L1085.4,840 L1090,842.7 L1104,842.7 L1110,845.6 L1112.8,852.7 L1121.4,857 L1131.4,851 L1132.8,840 L1128.5,837 L1128.5,821.3 L1134,810 L1148.5,792.8 L1154,777 L1154,770 L1167,755 L1182.7,761.4 L1194,770 L1209.8,801 L1212.7,805.6 L1215.5,802.8 L1227,800 L1241,790 L1254.8,784 L1256,777 L1254,768.5 L1257.5,760 L1258.3,751.4 L1260.5,740 L1261,730 L1268.7,702 L1272.5,683 L1274,668 L1272.5,657 L1270.6,651.6 L1247,648 L1248,629 L1240.7,616 L1216.5,603 L1212,560 L1205,500 L1193.8,456 L1189,451.4 L1173.8,448 L1167.7,422 L1168.4,410 L1173.8,402 L1183,405 L1206,399 L1223,376 L1244.5,369 L1252.2,370 L1245.4,340 L1244.5,330 L1235.4,295.6 L1226.9,261 L1226.9,252.8 L1222.6,215 L1222,205 L1124,205 L1124,215 L1122.7,224 L1117,227 L1118.4,241.4 L1118.4,252.8 L1127,258.5 L1128.4,270 L1118.4,275.6 L1111,281 L1110,277 L1085.6,284 L1058.5,290 L1057,294 L1031.4,302.8 L1000,303.5 L991,305 L989.7,300.6 L932.7,307 L929.8,310 L927,302.8 L905.6,299 L901,292.8 L894,281 L885.6,277 L884,255.7 L880,247 L867,241 L865.6,231 L858.5,224 L847.8,215 L847.8,205 L802.8,205 Z"/>
<g clip-path="url(#outside)">
<polyline points="858,214 852,245 838,270 815,290 790,305 770,321" fill="none" stroke-linejoin="round" stroke-linecap="round" stroke="rgb(140,136,162)" stroke-opacity="0.45" stroke-width="6.5"/>
<polyline points="218,447 290,389 361,370 486,364 594,345 665,357 755,379 800,386 828,385 866,383 892,390 912,402 928,416 955,426 978,438 998,444.5 1051,441 1074,447 1081,450 1097,461 1113,470 1140,482 1200,490 1309,488 1374,480 1450,469 1545,465 1640,472 1735,457 1811,423 1868,404 1897,402" fill="none" stroke-linejoin="round" stroke-linecap="round" stroke="rgb(140,136,162)" stroke-opacity="0.45" stroke-width="6.5"/>
<polyline points="794,748.5 823,727 844,710 864,691 879,676 894,660 917,635 944,614 960,595 982,578 1012,559 1038,539 1057,527 1085,519 1113,507 1160,495 1250,490 1309,488" fill="none" stroke-linejoin="round" stroke-linecap="round" stroke="rgb(140,136,162)" stroke-opacity="0.45" stroke-width="6.5"/>
<polyline points="461,214 454,286 483,364 490,447 504,500 558,540 559,641 544,678 526,704" fill="none" stroke-linejoin="round" stroke-linecap="round" stroke="rgb(140,136,162)" stroke-opacity="0.45" stroke-width="6.5"/>
<polyline points="546,214 529,314 526,364 540,393 562,465 576,511 572,540 559,560" fill="none" stroke-linejoin="round" stroke-linecap="round" stroke="rgb(140,136,162)" stroke-opacity="0.45" stroke-width="6.5"/>
<polyline points="770,321 758,379 766,429 762,540 763,641 760,660 757,685" fill="none" stroke-linejoin="round" stroke-linecap="round" stroke="rgb(140,136,162)" stroke-opacity="0.45" stroke-width="6.5"/>
<polyline points="218,589 281,558 359,556 429,556 455,575 474,619 485,667 485,701 481,723" fill="none" stroke-linejoin="round" stroke-linecap="round" stroke="rgb(140,136,162)" stroke-opacity="0.45" stroke-width="6.5"/>
<polyline points="218,619 266,619 292,652 318,690 366,738 374,753" fill="none" stroke-linejoin="round" stroke-linecap="round" stroke="rgb(140,136,162)" stroke-opacity="0.45" stroke-width="6.5"/>
<polyline points="303,779 344,745 381,734 448,719 485,704 533,704 589,706 663,721 700,723 730,697 760,686" fill="none" stroke-linejoin="round" stroke-linecap="round" stroke="rgb(140,136,162)" stroke-opacity="0.45" stroke-width="6.5"/>
<polyline points="218,797 281,816 366,827 385,838 420,868" fill="none" stroke-linejoin="round" stroke-linecap="round" stroke="rgb(140,136,162)" stroke-opacity="0.45" stroke-width="6.5"/>
<polyline points="626,827 663,823 719,797 774,767 800,752" fill="none" stroke-linejoin="round" stroke-linecap="round" stroke="rgb(140,136,162)" stroke-opacity="0.45" stroke-width="6.5"/>
<polyline points="700,727 730,771 737,827 730,868" fill="none" stroke-linejoin="round" stroke-linecap="round" stroke="rgb(140,136,162)" stroke-opacity="0.45" stroke-width="6.5"/>
<polyline points="281,797 292,868" fill="none" stroke-linejoin="round" stroke-linecap="round" stroke="rgb(140,136,162)" stroke-opacity="0.45" stroke-width="6.5"/>
<polyline points="1507,214 1511,271 1549,339 1571,381 1560,442 1537,480 1518,518 1501,560 1500,594 1491,619 1496,648 1483,677 1469,702 1465,735 1422,778 1411,803 1404,839 1368,868" fill="none" stroke-linejoin="round" stroke-linecap="round" stroke="rgb(140,136,162)" stroke-opacity="0.45" stroke-width="6.5"/>
<polyline points="1309,510 1355,503 1374,480" fill="none" stroke-linejoin="round" stroke-linecap="round" stroke="rgb(140,136,162)" stroke-opacity="0.45" stroke-width="6.5"/>
<polyline points="858,214 852,245 838,270 815,290 790,305 770,321" fill="none" stroke-linejoin="round" stroke-linecap="round" stroke="rgb(170,168,182)" stroke-opacity="0.45" stroke-width="3.2"/>
<polyline points="218,447 290,389 361,370 486,364 594,345 665,357 755,379 800,386 828,385 866,383 892,390 912,402 928,416 955,426 978,438 998,444.5 1051,441 1074,447 1081,450 1097,461 1113,470 1140,482 1200,490 1309,488 1374,480 1450,469 1545,465 1640,472 1735,457 1811,423 1868,404 1897,402" fill="none" stroke-linejoin="round" stroke-linecap="round" stroke="rgb(170,168,182)" stroke-opacity="0.45" stroke-width="3.2"/>
<polyline points="794,748.5 823,727 844,710 864,691 879,676 894,660 917,635 944,614 960,595 982,578 1012,559 1038,539 1057,527 1085,519 1113,507 1160,495 1250,490 1309,488" fill="none" stroke-linejoin="round" stroke-linecap="round" stroke="rgb(170,168,182)" stroke-opacity="0.45" stroke-width="3.2"/>
<polyline points="461,214 454,286 483,364 490,447 504,500 558,540 559,641 544,678 526,704" fill="none" stroke-linejoin="round" stroke-linecap="round" stroke="rgb(170,168,182)" stroke-opacity="0.45" stroke-width="3.2"/>
<polyline points="546,214 529,314 526,364 540,393 562,465 576,511 572,540 559,560" fill="none" stroke-linejoin="round" stroke-linecap="round" stroke="rgb(170,168,182)" stroke-opacity="0.45" stroke-width="3.2"/>
<polyline points="770,321 758,379 766,429 762,540 763,641 760,660 757,685" fill="none" stroke-linejoin="round" stroke-linecap="round" stroke="rgb(170,168,182)" stroke-opacity="0.45" stroke-width="3.2"/>
<polyline points="218,589 281,558 359,556 429,556 455,575 474,619 485,667 485,701 481,723" fill="none" stroke-linejoin="round" stroke-linecap="round" stroke="rgb(170,168,182)" stroke-opacity="0.45" stroke-width="3.2"/>
<polyline points="218,619 266,619 292,652 318,690 366,738 374,753" fill="none" stroke-linejoin="round" stroke-linecap="round" stroke="rgb(170,168,182)" stroke-opacity="0.45" stroke-width="3.2"/>
<polyline points="303,779 344,745 381,734 448,719 485,704 533,704 589,706 663,721 700,723 730,697 760,686" fill="none" stroke-linejoin="round" stroke-linecap="round" stroke="rgb(170,168,182)" stroke-opacity="0.45" stroke-width="3.2"/>
<polyline points="218,797 281,816 366,827 385,838 420,868" fill="none" stroke-linejoin="round" stroke-linecap="round" stroke="rgb(170,168,182)" stroke-opacity="0.45" stroke-width="3.2"/>
<polyline points="626,827 663,823 719,797 774,767 800,752" fill="none" stroke-linejoin="round" stroke-linecap="round" stroke="rgb(170,168,182)" stroke-opacity="0.45" stroke-width="3.2"/>
<polyline points="700,727 730,771 737,827 730,868" fill="none" stroke-linejoin="round" stroke-linecap="round" stroke="rgb(170,168,182)" stroke-opacity="0.45" stroke-width="3.2"/>
<polyline points="281,797 292,868" fill="none" stroke-linejoin="round" stroke-linecap="round" stroke="rgb(170,168,182)" stroke-opacity="0.45" stroke-width="3.2"/>
<polyline points="1507,214 1511,271 1549,339 1571,381 1560,442 1537,480 1518,518 1501,560 1500,594 1491,619 1496,648 1483,677 1469,702 1465,735 1422,778 1411,803 1404,839 1368,868" fill="none" stroke-linejoin="round" stroke-linecap="round" stroke="rgb(170,168,182)" stroke-opacity="0.45" stroke-width="3.2"/>
<polyline points="1309,510 1355,503 1374,480" fill="none" stroke-linejoin="round" stroke-linecap="round" stroke="rgb(170,168,182)" stroke-opacity="0.45" stroke-width="3.2"/>
</g>
<polygon fill="none" stroke="#2a8676" stroke-width="3" stroke-linejoin="round" points="802.8,215 797,238.5 796.4,274 799,310 788.5,322.7 791,330 803,343.6 803,362.3 821.7,381 833.6,398 835.3,425.3 832,435.5 833.6,449 842,462.8 849,490 852.3,520.6 852.3,568.3 849,575 828.5,571.7 784.3,602.3 779,612.6 771.7,640 774.3,648 758.5,655.8 746.7,663.7 742.7,670.3 742.7,676.9 752,682.2 755.9,696.7 750.6,712.5 746.7,721.7 750.6,727 748,737.5 762.5,744 782.2,742.8 794,745.4 801.5,754.6 792.3,768.4 794.6,777.6 803.8,798.4 843.5,803.7 853.2,805.5 862,813.4 869,811.2 875,815.1 874.2,818.6 883,823 889.2,819.5 889.2,816 884.8,815.1 884.8,807.2 889.2,806.3 892.7,810.7 912,809.9 914.6,802.8 927.8,790.5 940,787.9 941.3,781.4 951.3,778.5 967,777 970,787 977,782 991.3,780 992.7,774 997,771.4 999.8,780 998.4,790 1008.4,809 1025.5,820 1029.8,837 1057,837 1076.9,846.3 1085.4,840 1090,842.7 1104,842.7 1110,845.6 1112.8,852.7 1121.4,857 1131.4,851 1132.8,840 1128.5,837 1128.5,821.3 1134,810 1148.5,792.8 1154,777 1154,770 1167,755 1182.7,761.4 1194,770 1209.8,801 1212.7,805.6 1215.5,802.8 1227,800 1241,790 1254.8,784 1256,777 1254,768.5 1257.5,760 1258.3,751.4 1260.5,740 1261,730 1268.7,702 1272.5,683 1274,668 1272.5,657 1270.6,651.6 1247,648 1248,629 1240.7,616 1216.5,603 1212,560 1205,500 1193.8,456 1189,451.4 1173.8,448 1167.7,422 1168.4,410 1173.8,402 1183,405 1206,399 1223,376 1244.5,369 1252.2,370 1245.4,340 1244.5,330 1235.4,295.6 1226.9,261 1226.9,252.8 1222.6,215 1222,205 1124,205 1124,215 1122.7,224 1117,227 1118.4,241.4 1118.4,252.8 1127,258.5 1128.4,270 1118.4,275.6 1111,281 1110,277 1085.6,284 1058.5,290 1057,294 1031.4,302.8 1000,303.5 991,305 989.7,300.6 932.7,307 929.8,310 927,302.8 905.6,299 901,292.8 894,281 885.6,277 884,255.7 880,247 867,241 865.6,231 858.5,224 847.8,215 847.8,205 802.8,205"/>
<path d="M852 298 L878 293.5 Q864 291 852 294 Z" fill="rgba(0,0,0,0.17)" filter="url(#blr)"/>
<path d="M886.5 381 L912.5 376.5 Q898.5 374 886.5 377 Z" fill="rgba(0,0,0,0.17)" filter="url(#blr)"/>
<path d="M889 393.6 L915 389.1 Q901 386.6 889 389.6 Z" fill="rgba(0,0,0,0.17)" filter="url(#blr)"/>
<path d="M978.8 389.7 L1004.8 385.2 Q990.8 382.7 978.8 385.7 Z" fill="rgba(0,0,0,0.17)" filter="url(#blr)"/>
<path d="M1005.6 412 L1031.6 407.5 Q1017.6 405 1005.6 408 Z" fill="rgba(0,0,0,0.17)" filter="url(#blr)"/>
<path d="M1071.7 409 L1097.7 404.5 Q1083.7 402 1071.7 405 Z" fill="rgba(0,0,0,0.17)" filter="url(#blr)"/>
<path d="M1075.6 437.4 L1101.6 432.9 Q1087.6 430.4 1075.6 433.4 Z" fill="rgba(0,0,0,0.17)" filter="url(#blr)"/>
<path d="M932.6 447.4 L958.6 442.9 Q944.6 440.4 932.6 443.4 Z" fill="rgba(0,0,0,0.17)" filter="url(#blr)"/>
<path d="M985 534 L1011 529.5 Q997 527 985 530 Z" fill="rgba(0,0,0,0.17)" filter="url(#blr)"/>
<path d="M977 542 L1003 537.5 Q989 535 977 538 Z" fill="rgba(0,0,0,0.17)" filter="url(#blr)"/>
<path d="M958 559 L984 554.5 Q970 552 958 555 Z" fill="rgba(0,0,0,0.17)" filter="url(#blr)"/>
<path d="M987 571 L1013 566.5 Q999 564 987 567 Z" fill="rgba(0,0,0,0.17)" filter="url(#blr)"/>
<path d="M983 575 L1009 570.5 Q995 568 983 571 Z" fill="rgba(0,0,0,0.17)" filter="url(#blr)"/>
<path d="M992.7 602.8 L1018.7 598.3 Q1004.7 595.8 992.7 598.8 Z" fill="rgba(0,0,0,0.17)" filter="url(#blr)"/>
<path d="M843.4 605.9 L869.4 601.4 Q855.4 598.9 843.4 601.9 Z" fill="rgba(0,0,0,0.17)" filter="url(#blr)"/>
<path d="M998.9 639 L1024.9 634.5 Q1010.9 632 998.9 635 Z" fill="rgba(0,0,0,0.17)" filter="url(#blr)"/>
<path d="M1029.6 642.8 L1055.6 638.3 Q1041.6 635.8 1029.6 638.8 Z" fill="rgba(0,0,0,0.17)" filter="url(#blr)"/>
<path d="M1041.9 664.3 L1067.9 659.8 Q1053.9 657.3 1041.9 660.3 Z" fill="rgba(0,0,0,0.17)" filter="url(#blr)"/>
<path d="M956.6 673.5 L982.6 669.0 Q968.6 666.5 956.6 669.5 Z" fill="rgba(0,0,0,0.17)" filter="url(#blr)"/>
<path d="M998.9 672.8 L1024.9 668.3 Q1010.9 665.8 998.9 668.8 Z" fill="rgba(0,0,0,0.17)" filter="url(#blr)"/>
<path d="M1026.5 682 L1052.5 677.5 Q1038.5 675 1026.5 678 Z" fill="rgba(0,0,0,0.17)" filter="url(#blr)"/>
<path d="M972 695 L998 690.5 Q984 688 972 691 Z" fill="rgba(0,0,0,0.17)" filter="url(#blr)"/>
<path d="M998.1 698.1 L1024.1 693.6 Q1010.1 691.1 998.1 694.1 Z" fill="rgba(0,0,0,0.17)" filter="url(#blr)"/>
<path d="M1025 696.6 L1051 692.1 Q1037 689.6 1025 692.6 Z" fill="rgba(0,0,0,0.17)" filter="url(#blr)"/>
<path d="M878 678 L904 673.5 Q890 671 878 674 Z" fill="rgba(0,0,0,0.17)" filter="url(#blr)"/>
<path d="M889.5 691.2 L915.5 686.7 Q901.5 684.2 889.5 687.2 Z" fill="rgba(0,0,0,0.17)" filter="url(#blr)"/>
<path d="M877.2 698.1 L903.2 693.6 Q889.2 691.1 877.2 694.1 Z" fill="rgba(0,0,0,0.17)" filter="url(#blr)"/>
<path d="M918.7 689.6 L944.7 685.1 Q930.7 682.6 918.7 685.6 Z" fill="rgba(0,0,0,0.17)" filter="url(#blr)"/>
<path d="M1186.8 637 L1212.8 632.5 Q1198.8 630 1186.8 633 Z" fill="rgba(0,0,0,0.17)" filter="url(#blr)"/>
<path d="M1212 641.6 L1238 637.1 Q1224 634.6 1212 637.6 Z" fill="rgba(0,0,0,0.17)" filter="url(#blr)"/>
<path d="M1282 659.4 L1308 654.9 Q1294 652.4 1282 655.4 Z" fill="rgba(0,0,0,0.17)" filter="url(#blr)"/>
<path d="M1255.8 679.9 L1281.8 675.4 Q1267.8 672.9 1255.8 675.9 Z" fill="rgba(0,0,0,0.17)" filter="url(#blr)"/>
<path d="M1198 721 L1224 716.5 Q1210 714 1198 717 Z" fill="rgba(0,0,0,0.17)" filter="url(#blr)"/>
<path d="M1018.8 763.6 L1044.8 759.1 Q1030.8 756.6 1018.8 759.6 Z" fill="rgba(0,0,0,0.17)" filter="url(#blr)"/>
<path d="M861.1 776.2 L887.1 771.7 Q873.1 769.2 861.1 772.2 Z" fill="rgba(0,0,0,0.17)" filter="url(#blr)"/>
<path d="M903.7 790.4 L929.7 785.9 Q915.7 783.4 903.7 786.4 Z" fill="rgba(0,0,0,0.17)" filter="url(#blr)"/>
<path d="M845.5 289 L854.5 289 L850 298 Z" fill="#22981f"/><circle cx="850" cy="279" r="10.9" fill="#fff" stroke="#38a536" stroke-width="2.9"/><text x="850" y="283.3" font-size="13.5" fill="#1d6b1d" stroke="#1d6b1d" stroke-width="0.55" text-anchor="middle">A</text>
<path d="M880.0 372 L889.0 372 L884.5 381 Z" fill="#22981f"/><circle cx="884.5" cy="362" r="10.9" fill="#fff" stroke="#38a536" stroke-width="2.9"/><text x="884.5" y="366.3" font-size="13.5" fill="#1d6b1d" stroke="#1d6b1d" stroke-width="0.55" text-anchor="middle">A</text>
<path d="M882.5 384.6 L891.5 384.6 L887 393.6 Z" fill="#22981f"/><circle cx="887" cy="374.6" r="10.9" fill="#fff" stroke="#38a536" stroke-width="2.9"/><text x="887" y="378.90000000000003" font-size="13.5" fill="#1d6b1d" stroke="#1d6b1d" stroke-width="0.55" text-anchor="middle">A</text>
<path d="M972.3 380.7 L981.3 380.7 L976.8 389.7 Z" fill="#22981f"/><circle cx="976.8" cy="370.7" r="10.9" fill="#fff" stroke="#38a536" stroke-width="2.9"/><text x="976.8" y="375.0" font-size="13.5" fill="#1d6b1d" stroke="#1d6b1d" stroke-width="0.55" text-anchor="middle">A</text>
<path d="M999.1 403 L1008.1 403 L1003.6 412 Z" fill="#22981f"/><circle cx="1003.6" cy="393" r="10.9" fill="#fff" stroke="#38a536" stroke-width="2.9"/><text x="1003.6" y="397.3" font-size="13.5" fill="#1d6b1d" stroke="#1d6b1d" stroke-width="0.55" text-anchor="middle">A</text>
<path d="M1065.2 400 L1074.2 400 L1069.7 409 Z" fill="#22981f"/><circle cx="1069.7" cy="390" r="10.9" fill="#fff" stroke="#38a536" stroke-width="2.9"/><text x="1069.7" y="394.3" font-size="13.5" fill="#1d6b1d" stroke="#1d6b1d" stroke-width="0.55" text-anchor="middle">A</text>
<path d="M1069.1 428.4 L1078.1 428.4 L1073.6 437.4 Z" fill="#22981f"/><circle cx="1073.6" cy="418.4" r="10.9" fill="#fff" stroke="#38a536" stroke-width="2.9"/><text x="1073.6" y="422.7" font-size="13.5" fill="#1d6b1d" stroke="#1d6b1d" stroke-width="0.55" text-anchor="middle">A</text>
<path d="M926.1 438.4 L935.1 438.4 L930.6 447.4 Z" fill="#22981f"/><circle cx="930.6" cy="428.4" r="10.9" fill="#fff" stroke="#38a536" stroke-width="2.9"/><text x="930.6" y="432.7" font-size="13.5" fill="#1d6b1d" stroke="#1d6b1d" stroke-width="0.55" text-anchor="middle">A</text>
<path d="M978.5 525 L987.5 525 L983 534 Z" fill="#22981f"/><circle cx="983" cy="515" r="10.9" fill="#fff" stroke="#38a536" stroke-width="2.9"/><text x="983" y="519.3" font-size="13.5" fill="#1d6b1d" stroke="#1d6b1d" stroke-width="0.55" text-anchor="middle">A</text>
<path d="M970.5 533 L979.5 533 L975 542 Z" fill="#22981f"/><circle cx="975" cy="523" r="10.9" fill="#fff" stroke="#38a536" stroke-width="2.9"/><text x="975" y="527.3" font-size="13.5" fill="#1d6b1d" stroke="#1d6b1d" stroke-width="0.55" text-anchor="middle">A</text>
<path d="M951.5 550 L960.5 550 L956 559 Z" fill="#22981f"/><circle cx="956" cy="540" r="10.9" fill="#fff" stroke="#38a536" stroke-width="2.9"/><text x="956" y="544.3" font-size="13.5" fill="#1d6b1d" stroke="#1d6b1d" stroke-width="0.55" text-anchor="middle">A</text>
<path d="M980.5 562 L989.5 562 L985 571 Z" fill="#22981f"/><circle cx="985" cy="552" r="10.9" fill="#fff" stroke="#38a536" stroke-width="2.9"/><text x="985" y="556.3" font-size="13.5" fill="#1d6b1d" stroke="#1d6b1d" stroke-width="0.55" text-anchor="middle">A</text>
<path d="M976.5 566 L985.5 566 L981 575 Z" fill="#22981f"/><circle cx="981" cy="556" r="10.9" fill="#fff" stroke="#38a536" stroke-width="2.9"/><text x="981" y="560.3" font-size="13.5" fill="#1d6b1d" stroke="#1d6b1d" stroke-width="0.55" text-anchor="middle">A</text>
<path d="M986.2 593.8 L995.2 593.8 L990.7 602.8 Z" fill="#22981f"/><circle cx="990.7" cy="583.8" r="10.9" fill="#fff" stroke="#38a536" stroke-width="2.9"/><text x="990.7" y="588.0999999999999" font-size="13.5" fill="#1d6b1d" stroke="#1d6b1d" stroke-width="0.55" text-anchor="middle">A</text>
<path d="M836.9 596.9 L845.9 596.9 L841.4 605.9 Z" fill="#22981f"/><circle cx="841.4" cy="586.9" r="10.9" fill="#fff" stroke="#38a536" stroke-width="2.9"/><text x="841.4" y="591.1999999999999" font-size="13.5" fill="#1d6b1d" stroke="#1d6b1d" stroke-width="0.55" text-anchor="middle">A</text>
<path d="M992.4 630 L1001.4 630 L996.9 639 Z" fill="#22981f"/><circle cx="996.9" cy="620" r="10.9" fill="#fff" stroke="#38a536" stroke-width="2.9"/><text x="996.9" y="624.3" font-size="13.5" fill="#1d6b1d" stroke="#1d6b1d" stroke-width="0.55" text-anchor="middle">A</text>
<path d="M1023.0999999999999 633.8 L1032.1 633.8 L1027.6 642.8 Z" fill="#22981f"/><circle cx="1027.6" cy="623.8" r="10.9" fill="#fff" stroke="#38a536" stroke-width="2.9"/><text x="1027.6" y="628.0999999999999" font-size="13.5" fill="#1d6b1d" stroke="#1d6b1d" stroke-width="0.55" text-anchor="middle">A</text>
<path d="M1035.4 655.3 L1044.4 655.3 L1039.9 664.3 Z" fill="#22981f"/><circle cx="1039.9" cy="645.3" r="10.9" fill="#fff" stroke="#38a536" stroke-width="2.9"/><text x="1039.9" y="649.5999999999999" font-size="13.5" fill="#1d6b1d" stroke="#1d6b1d" stroke-width="0.55" text-anchor="middle">A</text>
<path d="M950.1 664.5 L959.1 664.5 L954.6 673.5 Z" fill="#22981f"/><circle cx="954.6" cy="654.5" r="10.9" fill="#fff" stroke="#38a536" stroke-width="2.9"/><text x="954.6" y="658.8" font-size="13.5" fill="#1d6b1d" stroke="#1d6b1d" stroke-width="0.55" text-anchor="middle">A</text>
<path d="M992.4 663.8 L1001.4 663.8 L996.9 672.8 Z" fill="#22981f"/><circle cx="996.9" cy="653.8" r="10.9" fill="#fff" stroke="#38a536" stroke-width="2.9"/><text x="996.9" y="658.0999999999999" font-size="13.5" fill="#1d6b1d" stroke="#1d6b1d" stroke-width="0.55" text-anchor="middle">A</text>
<path d="M1020.0 673 L1029.0 673 L1024.5 682 Z" fill="#22981f"/><circle cx="1024.5" cy="663" r="10.9" fill="#fff" stroke="#38a536" stroke-width="2.9"/><text x="1024.5" y="667.3" font-size="13.5" fill="#1d6b1d" stroke="#1d6b1d" stroke-width="0.55" text-anchor="middle">A</text>
<path d="M965.5 686 L974.5 686 L970 695 Z" fill="#22981f"/><circle cx="970" cy="676" r="10.9" fill="#fff" stroke="#38a536" stroke-width="2.9"/><text x="970" y="680.3" font-size="13.5" fill="#1d6b1d" stroke="#1d6b1d" stroke-width="0.55" text-anchor="middle">A</text>
<path d="M991.6 689.1 L1000.6 689.1 L996.1 698.1 Z" fill="#22981f"/><circle cx="996.1" cy="679.1" r="10.9" fill="#fff" stroke="#38a536" stroke-width="2.9"/><text x="996.1" y="683.4" font-size="13.5" fill="#1d6b1d" stroke="#1d6b1d" stroke-width="0.55" text-anchor="middle">A</text>
<path d="M1018.5 687.6 L1027.5 687.6 L1023 696.6 Z" fill="#22981f"/><circle cx="1023" cy="677.6" r="10.9" fill="#fff" stroke="#38a536" stroke-width="2.9"/><text x="1023" y="681.9" font-size="13.5" fill="#1d6b1d" stroke="#1d6b1d" stroke-width="0.55" text-anchor="middle">A</text>
<path d="M871.5 669 L880.5 669 L876 678 Z" fill="#22981f"/><circle cx="876" cy="659" r="10.9" fill="#fff" stroke="#38a536" stroke-width="2.9"/><text x="876" y="663.3" font-size="13.5" fill="#1d6b1d" stroke="#1d6b1d" stroke-width="0.55" text-anchor="middle">A</text>
<path d="M883.0 682.2 L892.0 682.2 L887.5 691.2 Z" fill="#22981f"/><circle cx="887.5" cy="672.2" r="10.9" fill="#fff" stroke="#38a536" stroke-width="2.9"/><text x="887.5" y="676.5" font-size="13.5" fill="#1d6b1d" stroke="#1d6b1d" stroke-width="0.55" text-anchor="middle">A</text>
<path d="M870.7 689.1 L879.7 689.1 L875.2 698.1 Z" fill="#22981f"/><circle cx="875.2" cy="679.1" r="10.9" fill="#fff" stroke="#38a536" stroke-width="2.9"/><text x="875.2" y="683.4" font-size="13.5" fill="#1d6b1d" stroke="#1d6b1d" stroke-width="0.55" text-anchor="middle">A</text>
<path d="M912.2 680.6 L921.2 680.6 L916.7 689.6 Z" fill="#22981f"/><circle cx="916.7" cy="670.6" r="10.9" fill="#fff" stroke="#38a536" stroke-width="2.9"/><text x="916.7" y="674.9" font-size="13.5" fill="#1d6b1d" stroke="#1d6b1d" stroke-width="0.55" text-anchor="middle">A</text>
<path d="M1180.3 628 L1189.3 628 L1184.8 637 Z" fill="#22981f"/><circle cx="1184.8" cy="618" r="10.9" fill="#fff" stroke="#38a536" stroke-width="2.9"/><text x="1184.8" y="622.3" font-size="13.5" fill="#1d6b1d" stroke="#1d6b1d" stroke-width="0.55" text-anchor="middle">A</text>
<path d="M1205.5 632.6 L1214.5 632.6 L1210 641.6 Z" fill="#22981f"/><circle cx="1210" cy="622.6" r="10.9" fill="#fff" stroke="#38a536" stroke-width="2.9"/><text x="1210" y="626.9" font-size="13.5" fill="#1d6b1d" stroke="#1d6b1d" stroke-width="0.55" text-anchor="middle">A</text>
<path d="M1275.5 650.4 L1284.5 650.4 L1280 659.4 Z" fill="#22981f"/><circle cx="1280" cy="640.4" r="10.9" fill="#fff" stroke="#38a536" stroke-width="2.9"/><text x="1280" y="644.6999999999999" font-size="13.5" fill="#1d6b1d" stroke="#1d6b1d" stroke-width="0.55" text-anchor="middle">A</text>
<path d="M1249.3 670.9 L1258.3 670.9 L1253.8 679.9 Z" fill="#22981f"/><circle cx="1253.8" cy="660.9" r="10.9" fill="#fff" stroke="#38a536" stroke-width="2.9"/><text x="1253.8" y="665.1999999999999" font-size="13.5" fill="#1d6b1d" stroke="#1d6b1d" stroke-width="0.55" text-anchor="middle">A</text>
<path d="M1191.5 712 L1200.5 712 L1196 721 Z" fill="#22981f"/><circle cx="1196" cy="702" r="10.9" fill="#fff" stroke="#38a536" stroke-width="2.9"/><text x="1196" y="706.3" font-size="13.5" fill="#1d6b1d" stroke="#1d6b1d" stroke-width="0.55" text-anchor="middle">A</text>
<path d="M1012.3 754.6 L1021.3 754.6 L1016.8 763.6 Z" fill="#22981f"/><circle cx="1016.8" cy="744.6" r="10.9" fill="#fff" stroke="#38a536" stroke-width="2.9"/><text x="1016.8" y="748.9" font-size="13.5" fill="#1d6b1d" stroke="#1d6b1d" stroke-width="0.55" text-anchor="middle">A</text>
<path d="M854.6 767.2 L863.6 767.2 L859.1 776.2 Z" fill="#22981f"/><circle cx="859.1" cy="757.2" r="10.9" fill="#fff" stroke="#38a536" stroke-width="2.9"/><text x="859.1" y="761.5" font-size="13.5" fill="#1d6b1d" stroke="#1d6b1d" stroke-width="0.55" text-anchor="middle">A</text>
<path d="M897.2 781.4 L906.2 781.4 L901.7 790.4 Z" fill="#22981f"/><circle cx="901.7" cy="771.4" r="10.9" fill="#fff" stroke="#38a536" stroke-width="2.9"/><text x="901.7" y="775.6999999999999" font-size="13.5" fill="#1d6b1d" stroke="#1d6b1d" stroke-width="0.55" text-anchor="middle">A</text>
</svg>
</div>
<div class="qp" style="left:1553px;top:221.5px;width:344px;height:105px"></div>
<div class="ql" style="left:1579px;top:242px">查看日期:</div>
<div class="inp" style="left:1664px;top:232px;width:108px;height:37px;padding:8px 0 0 10px;color:#222">2026年01月</div>
<div class="inp" style="left:1771px;top:232px;width:74px;height:37px;padding:8px 0 0 6px;color:#222">日期<svg style="position:absolute;left:60px;top:14px" width="9" height="7"><path d="M1 1 L4.5 5 L8 1" fill="none" stroke="#111" stroke-width="2"/></svg></div>
<div class="ql" style="left:1579px;top:290px">查询人员:</div>
<div class="inp" style="left:1664px;top:280px;width:181px;height:37px;padding:8px 0 0 10px;color:#999">输入查询名称</div>
<div style="position:absolute;left:1849px;top:283.5px;width:40px;height:31px;background:#1b6ef3"><svg width="40" height="31"><circle cx="18" cy="14" r="8" fill="none" stroke="#fff" stroke-width="2.2"/><path d="M24 20 L29 25" stroke="#fff" stroke-width="2.4" stroke-linecap="round"/></svg></div>
<div class="qp" style="left:1553px;top:332px;width:344px;height:38.5px"></div>
<div style="position:absolute;left:1661px;top:341px;font-size:14px;line-height:18px;color:#555">任卫权</div>
<svg style="position:absolute;left:1840px;top:344px" width="16" height="15"><path d="M0 4.5 L7 4.5 L7 0 L16 7.5 L7 15 L7 10.5 L0 10.5 Z" fill="#000"/></svg>
<div id="pop">
<svg style="position:absolute;left:84px;top:137px" width="26" height="14"><path d="M0 0 L26 0 L13 13 Z" fill="#fff"/></svg>
<div style="position:absolute;left:176px;top:2px;font-size:18px;line-height:20px;color:#aaa">×</div>
<div class="pl" style="top:17px;font-weight:bold;color:#333">杨明朋</div>
<div class="pl" style="top:39px">河道：零河铁炉街道柳家村</div>
<div class="pl" style="top:61px">巡河里程：1.28公里</div>
<div class="pl" style="top:83px">巡河时间：2026-01-05 08:29</div>
<div class="pl" style="top:105px;color:#2b3ff0">查看详情</div>
</div>
<div id="foot"></div>
<div id="ftxt">© 2025 技术支持：陕西山清水秀信息科技有限公司|</div>
<div id="bottomline"></div>
<div style="position:absolute;left:1902px;top:0;width:1px;height:911px;background:#000"></div>
</body></html>
